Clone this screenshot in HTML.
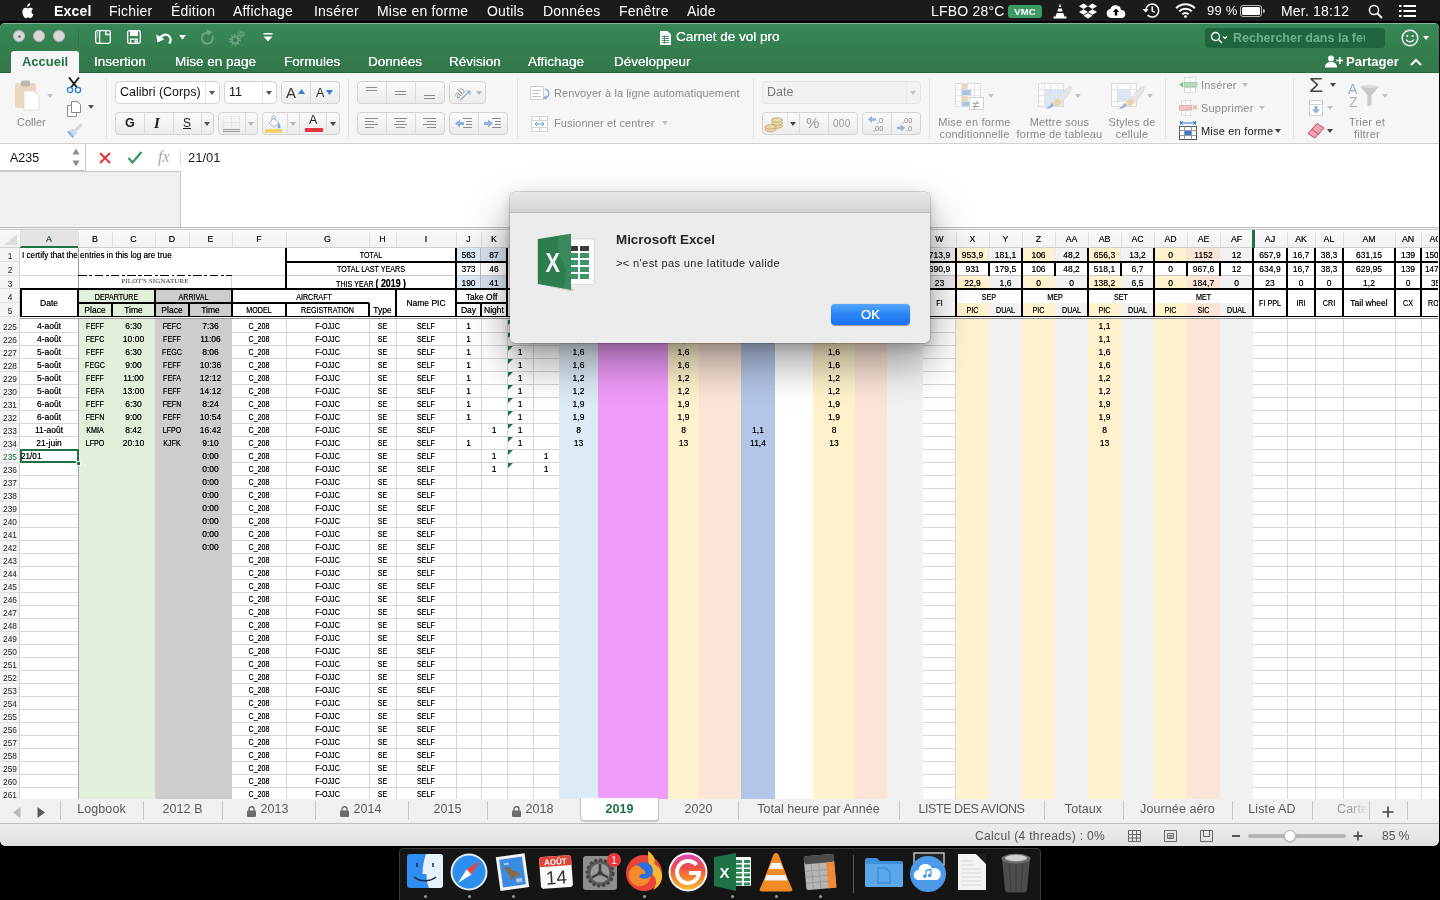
<!DOCTYPE html>
<html lang="fr"><head><meta charset="utf-8"><title>Carnet de vol pro</title>
<style>
*{box-sizing:border-box;margin:0;padding:0}
html,body{width:1440px;height:900px;overflow:hidden;background:#000;font-family:"Liberation Sans",sans-serif;}
.abs{position:absolute}
#menubar{will-change:transform;position:absolute;left:0;top:0;width:1440px;height:22px;background:#1b1b1b;border-bottom:1px solid #000;color:#fff;font-size:14px;line-height:22px;white-space:nowrap;letter-spacing:0.200px}
#menubar span{position:absolute;top:0}
#win{will-change:transform;position:absolute;left:0;top:23px;width:1439px;height:823px;background:#f6f6f6;border-radius:5px 5px 6px 6px;overflow:hidden}
#title{position:absolute;left:0;top:0;width:100%;height:50px;background:linear-gradient(#38885b,#35804f 45%,#33764b);box-shadow:inset 0 1px 0 #7fb796,inset 0 -1px 0 #256a40;z-index:3}
.tl{position:absolute;top:7px;width:12px;height:12px;border-radius:6px;background:#d8d8d8;border:0.5px solid #bcbcbc}
.tl i{position:absolute;left:4px;top:4px;width:3px;height:3px;border-radius:2px;background:#7d807e}
#rtabs{position:absolute;z-index:4;left:0;top:28px;width:100%;height:21px;color:#fff;font-size:13.500px;line-height:21px;white-space:nowrap;}
#rtabs span{position:absolute;top:0;text-shadow:0 0 0.4px #fff}
#rtabs .act{left:11px;width:68px;height:22px;background:#f6f6f6;border-radius:3px 3px 0 0;color:#1f7145;font-weight:bold;text-align:center;text-shadow:none;font-size:13px}
#ribbon{position:absolute;left:0;top:49px;width:100%;height:72px;background:#f6f6f6;border-bottom:1px solid #d1d1d1;color:#8a8a8a;font-size:11px;white-space:nowrap}
.btn{position:absolute;height:23px;border:1px solid #d4d4d4;border-radius:4px;background:linear-gradient(#fafafa,#ececec);}
.btn.w{background:#fff}
.vsep{position:absolute;top:6px;height:60px;width:1px;background:#e0e0e0}
.bsep{position:absolute;top:0;width:1px;height:21px;background:#dcdcdc}
.rt{position:absolute;}

#fbar{position:absolute;left:0;top:121px;width:100%;height:84px;background:#fff;border-bottom:1px solid #bdbdbd;box-shadow:0 1px 0 #f3f3f3}
#stabs{position:absolute;left:0;top:775.5px;width:100%;height:25.5px;background:#f0f0f0;border-bottom:1px solid #bdbdbd;white-space:nowrap}
.st{position:absolute;top:1px;height:20px;line-height:19px;font-size:12.500px;color:#5a5a5a;text-align:center;letter-spacing:0.100px}
#status{position:absolute;left:0;top:801px;width:100%;height:22px;background:linear-gradient(#ececec,#e0e0e0)}
#dlg{will-change:transform;position:absolute;left:510px;top:192px;width:420px;height:151px;background:#ececec;border-radius:5px;box-shadow:0 0 0 0.500px rgba(0,0,0,0.300),0 20px 40px 2px rgba(0,0,0,0.360),0 5px 12px rgba(0,0,0,0.160);overflow:hidden}
#dlgt{position:absolute;left:0;top:0;width:100%;height:21px;background:linear-gradient(#e8e8e8,#d3d3d3);border-bottom:1px solid #b8b8b8}
#dock{will-change:transform;position:absolute;left:399px;top:848px;width:642px;height:60px;background:#151515;border:1px solid #3a3a3a;border-radius:4px 4px 0 0}

#grid{position:absolute;left:0;top:206px;width:1437.500px;height:570px;background:#fff;overflow:hidden;font-size:8.500px;color:#000}
#grid .a{position:absolute}
#grid .c{position:absolute;text-align:center;white-space:nowrap;overflow:visible;text-shadow:0 0 0.400px rgba(0,0,0,0.700)}
#grid .c.u{transform:scaleX(0.840);transform-origin:50% 50%}
#grid .c.l{text-align:left;transform-origin:0 50%}
#grid .c.l:not(.u){transform:scaleX(0.960)}
#grid .c.ser{font-family:"Liberation Serif",serif;font-size:7px;transform:none;color:#333;text-shadow:none;letter-spacing:0.100px}
#grid .c.rh{font-size:9px;text-shadow:none;transform:scaleX(0.920);padding-top:1px}
#grid .c.ch{font-size:8.800px;color:#1a1a1a;text-shadow:0 0 0.400px rgba(0,0,0,0.800);transform:none}
#grid .tri{width:0;height:0;border-top:5px solid #1e7145;border-right:5px solid transparent}
#grid b{font-size:10.500px}
</style></head>
<body>
<div id="menubar"><svg class="abs" style="left:20px;top:3px" width="15" height="17" viewBox="0 0 15 17"><path fill="#fff" d="M10.2 0.3c0.1 0.9-0.3 1.8-0.8 2.400-0.600 0.700-1.500 1.200-2.300 1.100-0.100-0.900 0.300-1.800 0.800-2.300 0.600-0.700 1.600-1.200 2.300-1.200zM13 5.900c-0.100 0.100-1.500 0.900-1.500 2.700 0 2.100 1.800 2.800 1.900 2.800 0 0.100-0.300 1-0.900 2-0.600 0.800-1.200 1.700-2.100 1.700s-1.200-0.500-2.200-0.500c-1.100 0-1.400 0.600-2.200 0.600-0.900 0-1.600-0.900-2.200-1.800-1.200-1.700-2.100-4.800-0.900-6.900 0.600-1.100 1.700-1.700 2.800-1.700 0.900 0 1.700 0.600 2.200 0.600s1.500-0.700 2.600-0.600c0.400 0 1.700 0.200 2.500 1.100z"/></svg><span style="left:54px;font-weight:bold;">Excel</span><span style="left:109px;">Fichier</span><span style="left:171px;">Édition</span><span style="left:233px;">Affichage</span><span style="left:314px;">Insérer</span><span style="left:377px;">Mise en forme</span><span style="left:487px;">Outils</span><span style="left:543px;">Données</span><span style="left:619px;">Fenêtre</span><span style="left:687px;">Aide</span><span style="left:931px;font-size:14px">LFBO 28°C</span><div class="abs" style="left:1008px;top:5px;width:34px;height:13px;border-radius:3px;background:#3c9a64;color:#fff;font-size:9.5px;line-height:13px;text-align:center;font-weight:bold">VMC</div><svg class="abs" style="left:1052px;top:3px" width="16" height="16" viewBox="0 0 16 16"><path fill="#fff" d="M8 0.500l1.200 3.500h-2.400zM6.300 5.500h3.400l1 3h-5.400zM4.800 10h6.400l1.300 3.500h2v2h-13v-2h2z"/></svg><svg class="abs" style="left:1079px;top:3px" width="18" height="16" viewBox="0 0 18 16"><path fill="#fff" d="M4.500 0.500l4.500 2.800-4.500 2.800-4.500-2.800zM13.500 0.500l4.500 2.800-4.500 2.800-4.500-2.800zM0 9l4.500-2.800 4.500 2.800-4.500 2.800zM13.500 6.200l4.500 2.800-4.500 2.800-4.500-2.800zM4.500 12.700l4.500-2.800 4.500 2.800-4.500 2.800z"/></svg><svg class="abs" style="left:1106px;top:4px" width="20" height="14" viewBox="0 0 20 14"><path fill="#fff" d="M5 14a4.500 4.500 0 0 1-0.700-8.900a5.500 5.500 0 0 1 10.700 0.900a4 4 0 0 1 0.500 8z"/><path fill="#000" d="M10 4.500l3.200 3.500h-2v3.500h-2.400v-3.500h-2z"/></svg><svg class="abs" style="left:1142px;top:2px" width="19" height="17" viewBox="0 0 19 17"><path fill="none" stroke="#fff" stroke-width="1.500" d="M3.700 8.500a6.500 6.500 0 1 1 1.900 4.600M10.200 4.500v4.300l2.500 1.500"/><path fill="#fff" d="M0.500 7l3.200 3.500 3-3.500z"/></svg><svg class="abs" style="left:1175px;top:3px" width="21" height="15" viewBox="0 0 21 15"><path fill="none" stroke="#fff" stroke-width="2" stroke-linecap="butt" d="M1.200 5.200a13 13 0 0 1 18.600 0M4.200 8.300a8.800 8.800 0 0 1 12.600 0M7.300 11.300a4.500 4.500 0 0 1 6.400 0"/><circle cx="10.500" cy="13.600" r="1.400" fill="#fff"/></svg><span style="left:1207px;font-size:13px">99 %</span><svg class="abs" style="left:1240px;top:5px" width="25" height="12" viewBox="0 0 25 12"><rect x="0.500" y="0.500" width="21" height="11" rx="2.500" fill="none" stroke="#fff" stroke-opacity="0.700"/><rect x="2" y="2" width="18" height="8" rx="1.200" fill="#fff"/><path fill="#fff" fill-opacity="0.700" d="M23 4v4a2 2 0 0 0 0-4z"/></svg><span style="left:1281px">Mer. 18:12</span><svg class="abs" style="left:1368px;top:4px" width="15" height="15" viewBox="0 0 15 15"><circle cx="6" cy="6" r="4.600" fill="none" stroke="#fff" stroke-width="1.500"/><path stroke="#fff" stroke-width="1.800" d="M9.300 9.300l4.700 4.700"/></svg><svg class="abs" style="left:1399px;top:5px" width="17" height="12" viewBox="0 0 17 12"><path fill="#fff" d="M0 0h2.500v2h-2.500zM4.500 0h12.500v2h-12.500zM0 5h2.500v2h-2.500zM4.500 5h12.500v2h-12.500zM0 10h2.500v2h-2.500zM4.500 10h12.500v2h-12.500z"/></svg></div>
<div id="win">
<div id="title"><div class="tl" style="left:13px"><i></i></div><div class="tl" style="left:33px"></div><div class="tl" style="left:53px"></div><div class="abs" style="left:78px;top:6px;width:1px;height:18px;background:rgba(0,0,0,0.130)"></div><svg class="abs" style="left:95px;top:7px" width="16" height="14" viewBox="0 0 16 14"><rect x="0.700" y="0.700" width="14.600" height="12.600" rx="1.800" stroke="#fff" fill="none" stroke-width="1.300"/><path stroke="#fff" fill="none" stroke-width="1.300" d="M4.600 0.700v12.600M10.800 0.700v3.800h4.200"/><path stroke="#fff" stroke-width="1" stroke-dasharray="1 1" d="M2.600 2.500v6"/></svg><svg class="abs" style="left:127px;top:7px" width="14" height="14" viewBox="0 0 14 14"><rect x="0.700" y="0.700" width="12.600" height="12.600" rx="1.500" stroke="#fff" fill="none" stroke-width="1.300"/><path fill="#fff" d="M3 1h8v5h-8z"/><path stroke="#fff" fill="none" stroke-width="1.300" d="M3.600 13.300v-4.200h6.800v4.200"/><path fill="#fff" d="M7.500 10.300h2v2.500h-2z"/></svg><svg class="abs" style="left:156px;top:8px" width="17" height="13" viewBox="0 0 17 13"><path stroke="#fff" fill="none" stroke-width="2.200" d="M4 8c1.500-4.500 6.500-5.500 9-3 2.200 2.300 2 5.200 0 7.500"/><path fill="#fff" d="M0.300 3.500l1 8 7.200-3.200z"/></svg><svg class="abs" style="left:179px;top:12px" width="7" height="5" viewBox="0 0 7 5"><path fill="#fff" d="M0 0h7l-3.500 4.500z"/></svg><svg class="abs" style="left:199px;top:6px" width="15" height="16" viewBox="0 0 15 16"><path stroke="#6aa582" fill="none" stroke-width="2" d="M9.500 3.800a5.500 5.500 0 1 0 3.800 3.200"/><path fill="#6aa582" d="M7.500 0.300l6 2.700-4.800 4z"/></svg><svg class="abs" style="left:229px;top:7px" width="17" height="16" viewBox="0 0 17 16"><circle cx="6" cy="10" r="3.200" fill="none" stroke="#6aa582" stroke-width="1.600"/><circle cx="6" cy="10" r="5" fill="none" stroke="#6aa582" stroke-width="1.800" stroke-dasharray="1.700 1.440"/><circle cx="12.500" cy="4" r="1.600" fill="none" stroke="#6aa582" stroke-width="1.300"/><circle cx="12.500" cy="4" r="3" fill="none" stroke="#6aa582" stroke-width="1.300" stroke-dasharray="1.300 1.060"/></svg><svg class="abs" style="left:263px;top:10px" width="10" height="9" viewBox="0 0 10 9"><path fill="#fff" d="M0.500 0h9v1.500h-9zM0.500 3.500h9l-4.500 5z"/></svg><svg class="abs" style="left:660px;top:8px" width="11" height="14" viewBox="0 0 11 14"><path fill="#fff" d="M0 0h7.500l3.500 3.500v10.500h-11z"/><path stroke="#2a774a" stroke-width="0.800" d="M2 5.500h7M2 7.500h7M2 9.500h7M2 11.500h7M4.500 4.500v8"/></svg><div class="abs" style="left:676px;top:6px;color:#fff;font-size:13.500px;line-height:16px;white-space:nowrap;text-shadow:0 0 0.300px #fff">Carnet de vol pro</div><div class="abs" style="left:1205px;top:5px;width:180px;height:20px;border-radius:4px;background:#1f653d;"></div><svg class="abs" style="left:1210px;top:8px" width="18" height="14" viewBox="0 0 18 14"><circle cx="5.500" cy="5.500" r="4" fill="none" stroke="#fff" stroke-width="1.300"/><path stroke="#fff" stroke-width="1.500" d="M8.500 8.500l3.500 3.500"/><path stroke="#fff" stroke-width="1.200" fill="none" d="M13 5.500l2 2 2-2"/></svg><div class="abs" style="left:1233px;top:7px;color:#6fb08b;font-size:12.500px;line-height:16px;white-space:nowrap;font-weight:bold;width:132px;overflow:hidden">Rechercher dans la feuille</div><svg class="abs" style="left:1401px;top:6px" width="18" height="18" viewBox="0 0 18 18"><circle cx="9" cy="9" r="7.800" fill="none" stroke="#fff" stroke-width="1.400"/><circle cx="6.300" cy="7" r="1.100" fill="#fff"/><circle cx="11.700" cy="7" r="1.100" fill="#fff"/><path fill="none" stroke="#fff" stroke-width="1.300" d="M5 10.500c2 3 6 3 8 0"/></svg><svg class="abs" style="left:1423px;top:13px" width="6" height="4" viewBox="0 0 6 4"><path fill="#fff" d="M0 0h6l-3 4z"/></svg></div><div id="rtabs"><span class="act">Accueil</span><span style="left:94px">Insertion</span><span style="left:175px">Mise en page</span><span style="left:284px">Formules</span><span style="left:368px">Données</span><span style="left:449px">Révision</span><span style="left:528px">Affichage</span><span style="left:614px">Développeur</span><svg class="abs" style="left:1325px;top:4px" width="18" height="13" viewBox="0 0 18 13"><circle cx="6" cy="3.500" r="3" fill="#fff"/><path fill="#fff" d="M0 12.500c0-4 2.500-5.500 6-5.500s6 1.500 6 5.500zM14 2h1.600v2.700h2.700v1.600h-2.700v2.700h-1.600v-2.700h-2.700v-1.600h2.700z"/></svg><span style="left:1346px;font-weight:bold;text-shadow:none;font-size:13px">Partager</span><svg class="abs" style="left:1410px;top:7px" width="12" height="8" viewBox="0 0 12 8"><path fill="none" stroke="#fff" stroke-width="2" d="M1 7l5-5 5 5"/></svg></div>
<div id="ribbon"><svg class="abs" style="left:14px;top:8px" width="28" height="31" viewBox="0 0 28 31"><rect x="1" y="3" width="21" height="25" rx="2" fill="#ecd9bd"/><rect x="7" y="0.500" width="9" height="6" rx="1.500" fill="#b9b9b9"/><path fill="#fff" stroke="#d0d0d0" stroke-width="0.600" d="M10 11h10l5 5v14h-15z"/></svg><svg class="abs" style="left:47px;top:22px" width="6" height="4" viewBox="0 0 6 4"><path fill="#c4c4c4" d="M0 0h6l-3 4z"/></svg><div class="rt" style="left:17px;top:44px;font-size:11px;line-height:13px;color:#8a8a8a">Coller</div><svg class="abs" style="left:66px;top:5px" width="16" height="17" viewBox="0 0 16 17"><path stroke="#111" stroke-width="1.800" d="M3 0.500l8 10M13 0.500l-8 10"/><circle cx="4" cy="13" r="2.600" fill="none" stroke="#2f7fd6" stroke-width="1.400"/><circle cx="12" cy="13" r="2.600" fill="none" stroke="#2f7fd6" stroke-width="1.400"/></svg><svg class="abs" style="left:66px;top:29px" width="16" height="16" viewBox="0 0 16 16"><path fill="#fff" stroke="#8a8a8a" stroke-width="1" d="M5.500 0.500h6l3 3v8h-9zM1.500 4.500h4v7h5v4h-9z"/></svg><svg class="abs" style="left:88px;top:33px" width="6" height="4" viewBox="0 0 6 4"><path fill="#555" d="M0 0h6l-3 4z"/></svg><svg class="abs" style="left:66px;top:51px" width="17" height="17" viewBox="0 0 17 17"><path stroke="#d6d6d6" stroke-width="3" stroke-linecap="round" d="M15 2L10.500 6.500"/><path fill="#e9e9e9" d="M8 5.500l3.500 3.500-1.500 1.500-3.500-3.500z"/><path fill="#c5d8ee" d="M1 9L7 5.500L11.500 10L6.500 15z"/><path fill="#8fb1e0" d="M1 9L6.500 15L8 13.500L3 8z"/></svg><div class="vsep" style="left:106px"></div><div class="btn w" style="left:115px;top:9px;width:105px"><div class="bsep" style="left:89px;background:#e6e6e6"></div></div><div class="rt" style="left:120px;top:13px;font-size:12.500px;line-height:15px;color:#111">Calibri (Corps)</div><svg class="abs" style="left:209px;top:19px" width="6" height="4" viewBox="0 0 6 4"><path fill="#555" d="M0 0h6l-3 4z"/></svg><div class="btn w" style="left:224px;top:9px;width:53px"><div class="bsep" style="left:37px;background:#e6e6e6"></div></div><div class="rt" style="left:229px;top:13px;font-size:12.500px;line-height:15px;color:#111">11</div><svg class="abs" style="left:266px;top:19px" width="6" height="4" viewBox="0 0 6 4"><path fill="#555" d="M0 0h6l-3 4z"/></svg><div class="btn" style="left:281px;top:9px;width:59px"><div class="bsep" style="left:28px"></div></div><div class="rt" style="left:286px;top:12px;font-size:15px;line-height:18px;color:#333">A</div><svg class="abs" style="left:298px;top:17px" width="7" height="5" viewBox="0 0 7 5"><path fill="#2f7fd6" d="M0 5h7l-3.500-5z"/></svg><div class="rt" style="left:316px;top:14px;font-size:12.500px;line-height:15px;color:#333">A</div><svg class="abs" style="left:326px;top:18px" width="7" height="5" viewBox="0 0 7 5"><path fill="#2f7fd6" d="M0 0h7l-3.500 5z"/></svg><div class="btn" style="left:115px;top:40px;width:99px"><div class="bsep" style="left:28px"></div><div class="bsep" style="left:57px"></div><div class="bsep" style="left:85px"></div></div><div class="rt" style="left:125px;top:44px;font-size:12.500px;line-height:15px;color:#222;font-weight:bold">G</div><div class="rt" style="left:154px;top:43px;font-size:15px;line-height:17px;color:#222;font-style:italic;font-family:'Liberation Serif',serif;font-weight:bold">I</div><div class="rt" style="left:183px;top:44px;font-size:12px;line-height:15px;color:#222;text-decoration:underline">S</div><svg class="abs" style="left:204px;top:50px" width="6" height="4" viewBox="0 0 6 4"><path fill="#555" d="M0 0h6l-3 4z"/></svg><div class="btn" style="left:218px;top:40px;width:40px"><div class="bsep" style="left:26px"></div></div><svg class="abs" style="left:223px;top:44px" width="18" height="17" viewBox="0 0 18 17"><path fill="none" stroke="#d9d9d9" stroke-width="1" stroke-dasharray="1 1" d="M0.500 0.500h16v12M0.500 0.500v12M8.500 0.500v12M0.500 6.500h16"/><path stroke="#9a9a9a" stroke-width="1" d="M0 13.500h17M0 15.500h17"/></svg><svg class="abs" style="left:248px;top:50px" width="6" height="4" viewBox="0 0 6 4"><path fill="#b5b5b5" d="M0 0h6l-3 4z"/></svg><div class="btn" style="left:262px;top:40px;width:78px"><div class="bsep" style="left:24px"></div><div class="bsep" style="left:36px"></div><div class="bsep" style="left:63px"></div></div><svg class="abs" style="left:265px;top:43px" width="18" height="18" viewBox="0 0 18 18"><path fill="#fff" stroke="#9fb3c8" stroke-width="1" d="M4 8l5-5 5 5-5 4z"/><path fill="none" stroke="#9fb3c8" d="M7 5v-3a1.500 1.500 0 0 1 3 0v3"/><path fill="#7fa8d8" d="M14 8c1 2 1.500 3 1.500 3.800a1.500 1.500 0 0 1-3 0c0-0.800 0.500-1.800 1.500-3.800z"/><rect x="0" y="14" width="17" height="4" fill="#f2d46b"/></svg><svg class="abs" style="left:290px;top:50px" width="6" height="4" viewBox="0 0 6 4"><path fill="#b5b5b5" d="M0 0h6l-3 4z"/></svg><div class="rt" style="left:309px;top:41px;font-size:12.500px;line-height:14px;color:#222">A</div><div class="abs" style="left:305px;top:56px;width:18px;height:4px;background:#e5343f"></div><svg class="abs" style="left:330px;top:50px" width="6" height="4" viewBox="0 0 6 4"><path fill="#444" d="M0 0h6l-3 4z"/></svg><div class="vsep" style="left:348px"></div><div class="btn" style="left:357px;top:9px;width:88px"><div class="bsep" style="left:28px"></div><div class="bsep" style="left:57px"></div></div><svg class="abs" style="left:364px;top:14px" width="15" height="13" viewBox="0 0 15 13"><path stroke="#8c8c8c" stroke-width="1" d="M2 1.5h11M2 4.5h11"/></svg><svg class="abs" style="left:393px;top:14px" width="15" height="13" viewBox="0 0 15 13"><path stroke="#8c8c8c" stroke-width="1" d="M2 5.5h11M2 8.5h11"/></svg><svg class="abs" style="left:422px;top:14px" width="15" height="13" viewBox="0 0 15 13"><path stroke="#8c8c8c" stroke-width="1" d="M2 9.5h11M2 12.5h11"/></svg><div class="btn" style="left:449px;top:9px;width:37px"></div><svg class="abs" style="left:454px;top:12px" width="20" height="18" viewBox="0 0 20 18"><text x="1" y="12" font-size="10" fill="#9a9a9a" transform="rotate(-45 6 10)" font-family="Liberation Sans, sans-serif">ab</text><path stroke="#8fb1dc" stroke-width="1.200" fill="none" d="M6 16l10-9M16 7h-4M16 7v4"/></svg><svg class="abs" style="left:476px;top:19px" width="6" height="4" viewBox="0 0 6 4"><path fill="#b5b5b5" d="M0 0h6l-3 4z"/></svg><div class="btn" style="left:357px;top:40px;width:88px"><div class="bsep" style="left:28px"></div><div class="bsep" style="left:57px"></div></div><svg class="abs" style="left:364px;top:45px" width="15" height="13" viewBox="0 0 15 13"><path stroke="#8c8c8c" stroke-width="1" d="M1 1.500h13M1 4.500h9M1 7.500h13M1 10.500h9"/></svg><svg class="abs" style="left:393px;top:45px" width="15" height="13" viewBox="0 0 15 13"><path stroke="#8c8c8c" stroke-width="1" d="M1 1.500h13M3 4.500h9M1 7.500h13M3 10.500h9"/></svg><svg class="abs" style="left:422px;top:45px" width="15" height="13" viewBox="0 0 15 13"><path stroke="#8c8c8c" stroke-width="1" d="M1 1.500h13M5 4.500h9M1 7.500h13M5 10.500h9"/></svg><div class="btn" style="left:449px;top:40px;width:59px"><div class="bsep" style="left:28px"></div></div><svg class="abs" style="left:455px;top:45px" width="18" height="13" viewBox="0 0 18 13"><path fill="#8fb1dc" d="M0 6.500l5-4v2.500h4v3h-4v2.500z"/><path stroke="#8c8c8c" d="M8 1.500h9M11 4.500h6M11 7.500h6M8 10.500h9"/></svg><svg class="abs" style="left:484px;top:45px" width="18" height="13" viewBox="0 0 18 13"><path fill="#8fb1dc" d="M9 6.500l-5-4v2.500h-4v3h4v2.500z"/><path stroke="#8c8c8c" d="M8 1.500h9M11 4.500h6M11 7.500h6M8 10.500h9"/></svg><div class="vsep" style="left:517px"></div><svg class="abs" style="left:530px;top:14px" width="21" height="15" viewBox="0 0 21 15"><rect x="0.500" y="0.500" width="13" height="13" fill="#fff" stroke="#cfcfcf"/><path stroke="#bdbdbd" d="M2.500 4.500h8M2.500 7.500h6M2.500 10.500h8"/><path fill="none" stroke="#8fb1dc" stroke-width="1.500" d="M15 3c5 1 5 8 0 9"/><path fill="#8fb1dc" d="M12.500 12l4-3v5z"/></svg><div class="rt" style="left:554px;top:14px;font-size:11px;line-height:14px;letter-spacing:0.100px">Renvoyer à la ligne automatiquement</div><svg class="abs" style="left:531px;top:44px" width="18" height="17" viewBox="0 0 18 17"><rect x="0.500" y="0.500" width="16" height="15" fill="#fff" stroke="#d4d4d4"/><path stroke="#d4d4d4" d="M0.500 4.500h16M0.500 11.500h16M8.500 0.500v4M8.500 11.500v4"/><path stroke="#5b9bd5" stroke-width="1" d="M4 8h9M4 8l2-2M4 8l2 2M13 8l-2-2M13 8l-2 2" fill="none"/></svg><div class="rt" style="left:554px;top:44px;font-size:11px;line-height:14px;letter-spacing:0.100px">Fusionner et centrer</div><svg class="abs" style="left:662px;top:49px" width="6" height="4" viewBox="0 0 6 4"><path fill="#c0c0c0" d="M0 0h6l-3 4z"/></svg><div class="vsep" style="left:753px"></div><div class="btn" style="left:762px;top:9px;width:159px;background:#f2f2f2;border-color:#e4e4e4"><div class="bsep" style="left:143px;background:#e9e9e9"></div></div><div class="rt" style="left:767px;top:13px;font-size:12.500px;line-height:15px;color:#7a7a7a">Date</div><svg class="abs" style="left:910px;top:19px" width="6" height="4" viewBox="0 0 6 4"><path fill="#c0c0c0" d="M0 0h6l-3 4z"/></svg><div class="btn" style="left:762px;top:40px;width:96px"><div class="bsep" style="left:24px;background:#e6e6e6"></div><div class="bsep" style="left:36px"></div><div class="bsep" style="left:65px"></div></div><svg class="abs" style="left:764px;top:43px" width="21" height="18" viewBox="0 0 21 18"><g fill="#ecd9a8" stroke="#b99b62" stroke-width="0.700"><ellipse cx="13" cy="11" rx="5.500" ry="2.200"/><ellipse cx="13" cy="8" rx="5.500" ry="2.200"/><ellipse cx="13" cy="5" rx="5.500" ry="2.200"/><ellipse cx="6.500" cy="14.500" rx="5.500" ry="2.200"/><ellipse cx="6.500" cy="11.800" rx="5.500" ry="2.200"/></g></svg><svg class="abs" style="left:790px;top:50px" width="6" height="4" viewBox="0 0 6 4"><path fill="#444" d="M0 0h6l-3 4z"/></svg><div class="rt" style="left:806px;top:42px;font-size:15px;line-height:18px;color:#9a9a9a">%</div><div class="rt" style="left:833px;top:45px;font-size:10px;line-height:13px;color:#9a9a9a;letter-spacing:0.300px">000</div><div class="btn" style="left:862px;top:40px;width:59px"><div class="bsep" style="left:28px"></div></div><svg class="abs" style="left:867px;top:43px" width="20" height="18" viewBox="0 0 20 18"><path fill="#8fb1dc" d="M1 4.500l4-3.500v2.200h4v2.600h-4v2.200z"/><text x="10" y="8" font-size="7.500" fill="#8a8a8a" font-family="Liberation Sans, sans-serif">,0</text><text x="6" y="16" font-size="7.500" fill="#8a8a8a" font-family="Liberation Sans, sans-serif">,00</text></svg><svg class="abs" style="left:896px;top:43px" width="20" height="18" viewBox="0 0 20 18"><path fill="#8fb1dc" d="M9 13l-4-3.500v2.200h-4v2.600h4v2.200z"/><text x="6" y="8" font-size="7.500" fill="#8a8a8a" font-family="Liberation Sans, sans-serif">,00</text><text x="10" y="16" font-size="7.500" fill="#8a8a8a" font-family="Liberation Sans, sans-serif">,0</text></svg><div class="vsep" style="left:929px"></div><svg class="abs" style="left:955px;top:11px" width="30" height="28" viewBox="0 0 30 28"><rect x="0.500" y="0.500" width="25" height="23" fill="#fff" stroke="#dcdcdc"/><path stroke="#e2e2e2" d="M0.500 6.500h25M0.500 12.500h25M0.500 18.500h25M6.500 0.500v23M12.500 0.500v23M19.500 0.500v23"/><rect x="7" y="1" width="5" height="5" fill="#f1d5b5"/><rect x="7" y="7" width="9" height="5" fill="#a9c4e6"/><rect x="7" y="13" width="5" height="5" fill="#f1d5b5"/><rect x="7" y="19" width="7" height="4" fill="#a9c4e6"/><rect x="14.500" y="14.500" width="14" height="12" fill="#fff" stroke="#cfcfcf"/><text x="17" y="25.500" font-size="13" fill="#9a9a9a" font-family="Liberation Sans, sans-serif">≠</text></svg><svg class="abs" style="left:988px;top:22px" width="6" height="4" viewBox="0 0 6 4"><path fill="#c4c4c4" d="M0 0h6l-3 4z"/></svg><div class="rt" style="left:924px;top:44px;width:101px;text-align:center;font-size:11px;line-height:12px;letter-spacing:0.200px">Mise en forme<br>conditionnelle</div><svg class="abs" style="left:1038px;top:11px" width="34" height="29" viewBox="0 0 34 29"><rect x="0.500" y="0.500" width="25" height="23" fill="#fff" stroke="#dcdcdc"/><rect x="7" y="7" width="18" height="16" fill="#dbe7f5"/><path stroke="#e2e2e2" d="M0.500 6.500h25M0.500 12.500h25M0.500 18.500h25M6.500 0.500v23M12.500 0.500v23M19.500 0.500v23"/><path fill="#e6e6e6" stroke="#d2d2d2" stroke-width="0.600" d="M33 3.500C35 5 30 13 24 19L20 15.500C24 9 31 2.500 33 3.500z"/><path fill="#ecd2a9" d="M20 15.500L24 19C22 22.500 19 23.500 15.500 22.500C14.500 19 17 16.500 20 15.500z"/><path fill="#8fb1e0" d="M15.500 22.500C14 25 11 26 7.500 25.500C10.500 24 12.500 22 14 19.500z"/></svg><svg class="abs" style="left:1075px;top:22px" width="6" height="4" viewBox="0 0 6 4"><path fill="#c4c4c4" d="M0 0h6l-3 4z"/></svg><div class="rt" style="left:1009px;top:44px;width:101px;text-align:center;font-size:11px;line-height:12px;letter-spacing:0.200px">Mettre sous<br>forme de tableau</div><svg class="abs" style="left:1111px;top:11px" width="34" height="29" viewBox="0 0 34 29"><rect x="0.500" y="0.500" width="25" height="23" fill="#fff" stroke="#dcdcdc"/><rect x="7" y="7" width="12" height="11" fill="#dbe7f5"/><path stroke="#e2e2e2" d="M0.500 6.500h25M0.500 18.500h25M6.500 0.500v23M19.500 0.500v23"/><path fill="#e6e6e6" stroke="#d2d2d2" stroke-width="0.600" d="M33 3.500C35 5 30 13 24 19L20 15.500C24 9 31 2.500 33 3.500z"/><path fill="#ecd2a9" d="M20 15.500L24 19C22 22.500 19 23.500 15.500 22.500C14.500 19 17 16.500 20 15.500z"/><path fill="#8fb1e0" d="M15.500 22.500C14 25 11 26 7.500 25.500C10.500 24 12.500 22 14 19.500z"/></svg><svg class="abs" style="left:1147px;top:22px" width="6" height="4" viewBox="0 0 6 4"><path fill="#c4c4c4" d="M0 0h6l-3 4z"/></svg><div class="rt" style="left:1092px;top:44px;width:80px;text-align:center;font-size:11px;line-height:12px;letter-spacing:0.200px">Styles de<br>cellule</div><div class="vsep" style="left:1165px"></div><svg class="abs" style="left:1179px;top:5px" width="19" height="16" viewBox="0 0 19 16"><path stroke="#d8d8d8" fill="#fff" d="M5.500 0.500h11v15h-11zM5.500 5.500h11M5.500 10.500h11M11 0.500v15"/><rect x="5" y="5.500" width="13" height="4.500" fill="#b5dcc0" stroke="#8fc3a0" stroke-width="0.600"/><path fill="#8fc3a0" d="M0 7.700l4-3v6z"/></svg><div class="rt" style="left:1201px;top:6px;font-size:11px;line-height:14px;letter-spacing:0.200px">Insérer</div><svg class="abs" style="left:1242px;top:11px" width="6" height="4" viewBox="0 0 6 4"><path fill="#c0c0c0" d="M0 0h6l-3 4z"/></svg><svg class="abs" style="left:1179px;top:28px" width="19" height="16" viewBox="0 0 19 16"><path stroke="#d8d8d8" fill="#fff" d="M2.500 0.500h9v15h-9zM2.500 5.500h9M2.500 10.500h9M7 0.500v15"/><rect x="0.500" y="5.500" width="12" height="4.500" fill="#f0c2c8" stroke="#d99aa3" stroke-width="0.600"/><path stroke="#e5b184" stroke-width="1.300" d="M14 5.500l4 4M18 5.500l-4 4"/></svg><div class="rt" style="left:1201px;top:29px;font-size:11px;line-height:14px;letter-spacing:0.200px">Supprimer</div><svg class="abs" style="left:1259px;top:34px" width="6" height="4" viewBox="0 0 6 4"><path fill="#c0c0c0" d="M0 0h6l-3 4z"/></svg><svg class="abs" style="left:1179px;top:49px" width="18" height="19" viewBox="0 0 18 19"><path stroke="#2f7fd6" stroke-width="1" d="M1.500 0v4M16.500 0v4M2 2h14M4 0.500l-2 1.500 2 1.500M14 0.500l2 1.500-2 1.500" fill="none"/><rect x="0.500" y="5.500" width="17" height="13" fill="#fff" stroke="#555"/><path stroke="#9a9a9a" d="M0.500 9.500h17M0.500 14.500h17M5.500 5.500v13M12.500 5.500v13"/><rect x="6" y="10" width="6" height="4" fill="#2f7fd6"/></svg><div class="rt" style="left:1201px;top:52px;font-size:11px;line-height:14px;color:#222;letter-spacing:0.200px">Mise en forme</div><svg class="abs" style="left:1275px;top:57px" width="6" height="4" viewBox="0 0 6 4"><path fill="#444" d="M0 0h6l-3 4z"/></svg><div class="vsep" style="left:1293px"></div><div class="rt" style="left:1309px;top:1px;font-size:21px;line-height:24px;color:#444;transform:scaleX(1.100);transform-origin:0 50%">Σ</div><svg class="abs" style="left:1330px;top:11px" width="6" height="4" viewBox="0 0 6 4"><path fill="#444" d="M0 0h6l-3 4z"/></svg><svg class="abs" style="left:1309px;top:28px" width="14" height="16" viewBox="0 0 14 16"><rect x="0.500" y="0.500" width="13" height="15" fill="#fff" stroke="#d0d0d0"/><path stroke="#d0d0d0" d="M0.500 4.500h13"/><path fill="#8fb1dc" d="M5.500 6h3v3.500h2.500l-4 4-4-4h2.500z"/></svg><svg class="abs" style="left:1327px;top:34px" width="6" height="4" viewBox="0 0 6 4"><path fill="#c0c0c0" d="M0 0h6l-3 4z"/></svg><svg class="abs" style="left:1307px;top:50px" width="18" height="17" viewBox="0 0 18 17"><path fill="#f0a3b0" stroke="#c2475a" stroke-width="1" d="M1 11.500l9-10 7 4.500-9 10z"/><path stroke="#c2475a" d="M4.500 7.500l7 4.500"/></svg><svg class="abs" style="left:1327px;top:57px" width="6" height="4" viewBox="0 0 6 4"><path fill="#444" d="M0 0h6l-3 4z"/></svg><div class="rt" style="left:1348px;top:10px;font-size:14px;line-height:14px;color:#8fb1dc">A</div><div class="rt" style="left:1349px;top:23px;font-size:14px;line-height:14px;color:#b5b5b5">Z</div><svg class="abs" style="left:1359px;top:13px" width="21" height="22" viewBox="0 0 21 22"><path fill="#c9c9c9" d="M0.500 1h20l-8 9v10l-4 1.500v-11.500z"/><ellipse cx="10.500" cy="1.500" rx="10" ry="1.500" fill="#dedede"/></svg><svg class="abs" style="left:1382px;top:22px" width="6" height="4" viewBox="0 0 6 4"><path fill="#c4c4c4" d="M0 0h6l-3 4z"/></svg><div class="rt" style="left:1332px;top:44px;width:70px;text-align:center;font-size:11px;line-height:12px;letter-spacing:0.200px">Trier et<br>filtrer</div></div>
<div id="fbar"><div class="abs" style="left:0;top:0;width:86px;height:27px;background:#fff;border-right:1px solid #c9c9c9;border-bottom:1px solid #c9c9c9"></div><div class="abs" style="left:10px;top:6px;font-size:13px;line-height:16px;color:#111;transform:scaleX(0.960);transform-origin:0 50%">A235</div><svg class="abs" style="left:72px;top:4px" width="8" height="19" viewBox="0 0 8 19"><path fill="#8d8d8d" d="M4 0.500l3.500 6h-7zM4 18.500l3.500-6h-7z"/></svg><svg class="abs" style="left:99px;top:8px" width="12" height="12" viewBox="0 0 12 12"><path stroke="#e5352f" stroke-width="2" d="M1 1l10 10M11 1l-10 10"/></svg><svg class="abs" style="left:127px;top:7px" width="16" height="13" viewBox="0 0 16 13"><path fill="none" stroke="#2f9a5c" stroke-width="2.200" d="M1.500 7l4 4.500 9-10.500"/></svg><div class="abs" style="left:158px;top:3px;font-size:16px;line-height:20px;color:#a9a9a9;font-family:'Liberation Serif',serif;font-style:italic">fx</div><div class="abs" style="left:180px;top:6px;width:1px;height:15px;background:#d9d9d9"></div><div class="abs" style="left:188px;top:6px;font-size:13px;line-height:16px;color:#222;">21/01</div><div class="abs" style="left:0;top:27px;width:181px;height:56px;background:#f0f0f0;border-right:1px solid #c9c9c9;border-top:1px solid #c9c9c9"></div></div>
<div id="grid"><div class="a" style="left:78px;top:89px;width:34px;height:480.5px;background:#e2efda;"></div><div class="a" style="left:112px;top:89px;width:43px;height:480.5px;background:#e2efda;"></div><div class="a" style="left:155px;top:89px;width:34px;height:480.5px;background:#cdcdcd;"></div><div class="a" style="left:189px;top:89px;width:43px;height:480.5px;background:#cdcdcd;"></div><div class="a" style="left:559px;top:89px;width:39px;height:480.5px;background:#ddebf7;"></div><div class="a" style="left:598px;top:89px;width:70px;height:480.5px;background:#ef9bf9;"></div><div class="a" style="left:668px;top:89px;width:31px;height:480.5px;background:#fff2cc;"></div><div class="a" style="left:699px;top:89px;width:42px;height:480.5px;background:#fce4d6;"></div><div class="a" style="left:741px;top:89px;width:34px;height:480.5px;background:#b4c6e7;"></div><div class="a" style="left:775px;top:89px;width:38px;height:480.5px;background:#fff;"></div><div class="a" style="left:813px;top:89px;width:42px;height:480.5px;background:#fff2cc;"></div><div class="a" style="left:855px;top:89px;width:32px;height:480.5px;background:#fce4d6;"></div><div class="a" style="left:887px;top:89px;width:36px;height:480.5px;background:#f2f2f2;"></div><div class="a" style="left:956px;top:89px;width:33px;height:480.5px;background:#fff2cc;"></div><div class="a" style="left:989px;top:89px;width:33px;height:480.5px;background:#f2f2f2;"></div><div class="a" style="left:1022px;top:89px;width:33px;height:480.5px;background:#fff2cc;"></div><div class="a" style="left:1055px;top:89px;width:33px;height:480.5px;background:#f2f2f2;"></div><div class="a" style="left:1088px;top:89px;width:33px;height:480.5px;background:#fff2cc;"></div><div class="a" style="left:1121px;top:89px;width:33px;height:480.5px;background:#f2f2f2;"></div><div class="a" style="left:1154px;top:89px;width:33px;height:480.5px;background:#fff2cc;"></div><div class="a" style="left:1187px;top:89px;width:33px;height:480.5px;background:#fce4d6;"></div><div class="a" style="left:1220px;top:89px;width:33px;height:480.5px;background:#f2f2f2;"></div><div class="a" style="left:78px;top:60px;width:77px;height:28px;background:#e2efda;"></div><div class="a" style="left:155px;top:60px;width:77px;height:28px;background:#cdcdcd;"></div><div class="a" style="left:456px;top:19px;width:25px;height:14px;background:#ddebf7;"></div><div class="a" style="left:481px;top:19px;width:26px;height:14px;background:#d9e1f2;"></div><div class="a" style="left:456px;top:46.5px;width:25px;height:13.5px;background:#ddebf7;"></div><div class="a" style="left:481px;top:46.5px;width:26px;height:13.5px;background:#d9e1f2;"></div><div class="a" style="left:923px;top:19px;width:33px;height:14px;background:#ededed;"></div><div class="a" style="left:923px;top:46.5px;width:33px;height:13.5px;background:#ededed;"></div><div class="a" style="left:956px;top:19px;width:33px;height:14px;background:#fff2cc;"></div><div class="a" style="left:956px;top:46.5px;width:33px;height:13.5px;background:#fff2cc;"></div><div class="a" style="left:956px;top:74px;width:33px;height:14px;background:#fff2cc;"></div><div class="a" style="left:989px;top:19px;width:33px;height:14px;background:#f2f2f2;"></div><div class="a" style="left:989px;top:46.5px;width:33px;height:13.5px;background:#f2f2f2;"></div><div class="a" style="left:989px;top:74px;width:33px;height:14px;background:#f2f2f2;"></div><div class="a" style="left:1022px;top:19px;width:33px;height:14px;background:#fff2cc;"></div><div class="a" style="left:1022px;top:46.5px;width:33px;height:13.5px;background:#fff2cc;"></div><div class="a" style="left:1022px;top:74px;width:33px;height:14px;background:#fff2cc;"></div><div class="a" style="left:1055px;top:19px;width:33px;height:14px;background:#f2f2f2;"></div><div class="a" style="left:1055px;top:46.5px;width:33px;height:13.5px;background:#f2f2f2;"></div><div class="a" style="left:1055px;top:74px;width:33px;height:14px;background:#f2f2f2;"></div><div class="a" style="left:1088px;top:19px;width:33px;height:14px;background:#fff2cc;"></div><div class="a" style="left:1088px;top:46.5px;width:33px;height:13.5px;background:#fff2cc;"></div><div class="a" style="left:1088px;top:74px;width:33px;height:14px;background:#fff2cc;"></div><div class="a" style="left:1121px;top:19px;width:33px;height:14px;background:#f2f2f2;"></div><div class="a" style="left:1121px;top:46.5px;width:33px;height:13.5px;background:#f2f2f2;"></div><div class="a" style="left:1121px;top:74px;width:33px;height:14px;background:#f2f2f2;"></div><div class="a" style="left:1154px;top:19px;width:33px;height:14px;background:#fff2cc;"></div><div class="a" style="left:1154px;top:46.5px;width:33px;height:13.5px;background:#fff2cc;"></div><div class="a" style="left:1154px;top:74px;width:33px;height:14px;background:#fff2cc;"></div><div class="a" style="left:1187px;top:19px;width:33px;height:14px;background:#fce4d6;"></div><div class="a" style="left:1187px;top:46.5px;width:33px;height:13.5px;background:#fce4d6;"></div><div class="a" style="left:1187px;top:74px;width:33px;height:14px;background:#fce4d6;"></div><div class="a" style="left:1220px;top:19px;width:33px;height:14px;background:#f2f2f2;"></div><div class="a" style="left:1220px;top:46.5px;width:33px;height:13.5px;background:#f2f2f2;"></div><div class="a" style="left:1220px;top:74px;width:33px;height:14px;background:#f2f2f2;"></div><div class="a" style="left:20px;top:103px;width:58px;height:1px;background:#d6d6d6;"></div><div class="a" style="left:232px;top:103px;width:327px;height:1px;background:#d6d6d6;"></div><div class="a" style="left:923px;top:103px;width:33px;height:1px;background:#d6d6d6;"></div><div class="a" style="left:1253px;top:103px;width:187px;height:1px;background:#d6d6d6;"></div><div class="a" style="left:20px;top:116px;width:58px;height:1px;background:#d6d6d6;"></div><div class="a" style="left:232px;top:116px;width:327px;height:1px;background:#d6d6d6;"></div><div class="a" style="left:923px;top:116px;width:33px;height:1px;background:#d6d6d6;"></div><div class="a" style="left:1253px;top:116px;width:187px;height:1px;background:#d6d6d6;"></div><div class="a" style="left:20px;top:129px;width:58px;height:1px;background:#d6d6d6;"></div><div class="a" style="left:232px;top:129px;width:327px;height:1px;background:#d6d6d6;"></div><div class="a" style="left:923px;top:129px;width:33px;height:1px;background:#d6d6d6;"></div><div class="a" style="left:1253px;top:129px;width:187px;height:1px;background:#d6d6d6;"></div><div class="a" style="left:20px;top:142px;width:58px;height:1px;background:#d6d6d6;"></div><div class="a" style="left:232px;top:142px;width:327px;height:1px;background:#d6d6d6;"></div><div class="a" style="left:923px;top:142px;width:33px;height:1px;background:#d6d6d6;"></div><div class="a" style="left:1253px;top:142px;width:187px;height:1px;background:#d6d6d6;"></div><div class="a" style="left:20px;top:155px;width:58px;height:1px;background:#d6d6d6;"></div><div class="a" style="left:232px;top:155px;width:327px;height:1px;background:#d6d6d6;"></div><div class="a" style="left:923px;top:155px;width:33px;height:1px;background:#d6d6d6;"></div><div class="a" style="left:1253px;top:155px;width:187px;height:1px;background:#d6d6d6;"></div><div class="a" style="left:20px;top:168px;width:58px;height:1px;background:#d6d6d6;"></div><div class="a" style="left:232px;top:168px;width:327px;height:1px;background:#d6d6d6;"></div><div class="a" style="left:923px;top:168px;width:33px;height:1px;background:#d6d6d6;"></div><div class="a" style="left:1253px;top:168px;width:187px;height:1px;background:#d6d6d6;"></div><div class="a" style="left:20px;top:181px;width:58px;height:1px;background:#d6d6d6;"></div><div class="a" style="left:232px;top:181px;width:327px;height:1px;background:#d6d6d6;"></div><div class="a" style="left:923px;top:181px;width:33px;height:1px;background:#d6d6d6;"></div><div class="a" style="left:1253px;top:181px;width:187px;height:1px;background:#d6d6d6;"></div><div class="a" style="left:20px;top:194px;width:58px;height:1px;background:#d6d6d6;"></div><div class="a" style="left:232px;top:194px;width:327px;height:1px;background:#d6d6d6;"></div><div class="a" style="left:923px;top:194px;width:33px;height:1px;background:#d6d6d6;"></div><div class="a" style="left:1253px;top:194px;width:187px;height:1px;background:#d6d6d6;"></div><div class="a" style="left:20px;top:207px;width:58px;height:1px;background:#d6d6d6;"></div><div class="a" style="left:232px;top:207px;width:327px;height:1px;background:#d6d6d6;"></div><div class="a" style="left:923px;top:207px;width:33px;height:1px;background:#d6d6d6;"></div><div class="a" style="left:1253px;top:207px;width:187px;height:1px;background:#d6d6d6;"></div><div class="a" style="left:20px;top:220px;width:58px;height:1px;background:#d6d6d6;"></div><div class="a" style="left:232px;top:220px;width:327px;height:1px;background:#d6d6d6;"></div><div class="a" style="left:923px;top:220px;width:33px;height:1px;background:#d6d6d6;"></div><div class="a" style="left:1253px;top:220px;width:187px;height:1px;background:#d6d6d6;"></div><div class="a" style="left:20px;top:233px;width:58px;height:1px;background:#d6d6d6;"></div><div class="a" style="left:232px;top:233px;width:327px;height:1px;background:#d6d6d6;"></div><div class="a" style="left:923px;top:233px;width:33px;height:1px;background:#d6d6d6;"></div><div class="a" style="left:1253px;top:233px;width:187px;height:1px;background:#d6d6d6;"></div><div class="a" style="left:20px;top:246px;width:58px;height:1px;background:#d6d6d6;"></div><div class="a" style="left:232px;top:246px;width:327px;height:1px;background:#d6d6d6;"></div><div class="a" style="left:923px;top:246px;width:33px;height:1px;background:#d6d6d6;"></div><div class="a" style="left:1253px;top:246px;width:187px;height:1px;background:#d6d6d6;"></div><div class="a" style="left:20px;top:259px;width:58px;height:1px;background:#d6d6d6;"></div><div class="a" style="left:232px;top:259px;width:327px;height:1px;background:#d6d6d6;"></div><div class="a" style="left:923px;top:259px;width:33px;height:1px;background:#d6d6d6;"></div><div class="a" style="left:1253px;top:259px;width:187px;height:1px;background:#d6d6d6;"></div><div class="a" style="left:20px;top:272px;width:58px;height:1px;background:#d6d6d6;"></div><div class="a" style="left:232px;top:272px;width:327px;height:1px;background:#d6d6d6;"></div><div class="a" style="left:923px;top:272px;width:33px;height:1px;background:#d6d6d6;"></div><div class="a" style="left:1253px;top:272px;width:187px;height:1px;background:#d6d6d6;"></div><div class="a" style="left:20px;top:285px;width:58px;height:1px;background:#d6d6d6;"></div><div class="a" style="left:232px;top:285px;width:327px;height:1px;background:#d6d6d6;"></div><div class="a" style="left:923px;top:285px;width:33px;height:1px;background:#d6d6d6;"></div><div class="a" style="left:1253px;top:285px;width:187px;height:1px;background:#d6d6d6;"></div><div class="a" style="left:20px;top:298px;width:58px;height:1px;background:#d6d6d6;"></div><div class="a" style="left:232px;top:298px;width:327px;height:1px;background:#d6d6d6;"></div><div class="a" style="left:923px;top:298px;width:33px;height:1px;background:#d6d6d6;"></div><div class="a" style="left:1253px;top:298px;width:187px;height:1px;background:#d6d6d6;"></div><div class="a" style="left:20px;top:311px;width:58px;height:1px;background:#d6d6d6;"></div><div class="a" style="left:232px;top:311px;width:327px;height:1px;background:#d6d6d6;"></div><div class="a" style="left:923px;top:311px;width:33px;height:1px;background:#d6d6d6;"></div><div class="a" style="left:1253px;top:311px;width:187px;height:1px;background:#d6d6d6;"></div><div class="a" style="left:20px;top:324px;width:58px;height:1px;background:#d6d6d6;"></div><div class="a" style="left:232px;top:324px;width:327px;height:1px;background:#d6d6d6;"></div><div class="a" style="left:923px;top:324px;width:33px;height:1px;background:#d6d6d6;"></div><div class="a" style="left:1253px;top:324px;width:187px;height:1px;background:#d6d6d6;"></div><div class="a" style="left:20px;top:337px;width:58px;height:1px;background:#d6d6d6;"></div><div class="a" style="left:232px;top:337px;width:327px;height:1px;background:#d6d6d6;"></div><div class="a" style="left:923px;top:337px;width:33px;height:1px;background:#d6d6d6;"></div><div class="a" style="left:1253px;top:337px;width:187px;height:1px;background:#d6d6d6;"></div><div class="a" style="left:20px;top:350px;width:58px;height:1px;background:#d6d6d6;"></div><div class="a" style="left:232px;top:350px;width:327px;height:1px;background:#d6d6d6;"></div><div class="a" style="left:923px;top:350px;width:33px;height:1px;background:#d6d6d6;"></div><div class="a" style="left:1253px;top:350px;width:187px;height:1px;background:#d6d6d6;"></div><div class="a" style="left:20px;top:363px;width:58px;height:1px;background:#d6d6d6;"></div><div class="a" style="left:232px;top:363px;width:327px;height:1px;background:#d6d6d6;"></div><div class="a" style="left:923px;top:363px;width:33px;height:1px;background:#d6d6d6;"></div><div class="a" style="left:1253px;top:363px;width:187px;height:1px;background:#d6d6d6;"></div><div class="a" style="left:20px;top:376px;width:58px;height:1px;background:#d6d6d6;"></div><div class="a" style="left:232px;top:376px;width:327px;height:1px;background:#d6d6d6;"></div><div class="a" style="left:923px;top:376px;width:33px;height:1px;background:#d6d6d6;"></div><div class="a" style="left:1253px;top:376px;width:187px;height:1px;background:#d6d6d6;"></div><div class="a" style="left:20px;top:389px;width:58px;height:1px;background:#d6d6d6;"></div><div class="a" style="left:232px;top:389px;width:327px;height:1px;background:#d6d6d6;"></div><div class="a" style="left:923px;top:389px;width:33px;height:1px;background:#d6d6d6;"></div><div class="a" style="left:1253px;top:389px;width:187px;height:1px;background:#d6d6d6;"></div><div class="a" style="left:20px;top:402px;width:58px;height:1px;background:#d6d6d6;"></div><div class="a" style="left:232px;top:402px;width:327px;height:1px;background:#d6d6d6;"></div><div class="a" style="left:923px;top:402px;width:33px;height:1px;background:#d6d6d6;"></div><div class="a" style="left:1253px;top:402px;width:187px;height:1px;background:#d6d6d6;"></div><div class="a" style="left:20px;top:415px;width:58px;height:1px;background:#d6d6d6;"></div><div class="a" style="left:232px;top:415px;width:327px;height:1px;background:#d6d6d6;"></div><div class="a" style="left:923px;top:415px;width:33px;height:1px;background:#d6d6d6;"></div><div class="a" style="left:1253px;top:415px;width:187px;height:1px;background:#d6d6d6;"></div><div class="a" style="left:20px;top:428px;width:58px;height:1px;background:#d6d6d6;"></div><div class="a" style="left:232px;top:428px;width:327px;height:1px;background:#d6d6d6;"></div><div class="a" style="left:923px;top:428px;width:33px;height:1px;background:#d6d6d6;"></div><div class="a" style="left:1253px;top:428px;width:187px;height:1px;background:#d6d6d6;"></div><div class="a" style="left:20px;top:441px;width:58px;height:1px;background:#d6d6d6;"></div><div class="a" style="left:232px;top:441px;width:327px;height:1px;background:#d6d6d6;"></div><div class="a" style="left:923px;top:441px;width:33px;height:1px;background:#d6d6d6;"></div><div class="a" style="left:1253px;top:441px;width:187px;height:1px;background:#d6d6d6;"></div><div class="a" style="left:20px;top:454px;width:58px;height:1px;background:#d6d6d6;"></div><div class="a" style="left:232px;top:454px;width:327px;height:1px;background:#d6d6d6;"></div><div class="a" style="left:923px;top:454px;width:33px;height:1px;background:#d6d6d6;"></div><div class="a" style="left:1253px;top:454px;width:187px;height:1px;background:#d6d6d6;"></div><div class="a" style="left:20px;top:467px;width:58px;height:1px;background:#d6d6d6;"></div><div class="a" style="left:232px;top:467px;width:327px;height:1px;background:#d6d6d6;"></div><div class="a" style="left:923px;top:467px;width:33px;height:1px;background:#d6d6d6;"></div><div class="a" style="left:1253px;top:467px;width:187px;height:1px;background:#d6d6d6;"></div><div class="a" style="left:20px;top:480px;width:58px;height:1px;background:#d6d6d6;"></div><div class="a" style="left:232px;top:480px;width:327px;height:1px;background:#d6d6d6;"></div><div class="a" style="left:923px;top:480px;width:33px;height:1px;background:#d6d6d6;"></div><div class="a" style="left:1253px;top:480px;width:187px;height:1px;background:#d6d6d6;"></div><div class="a" style="left:20px;top:493px;width:58px;height:1px;background:#d6d6d6;"></div><div class="a" style="left:232px;top:493px;width:327px;height:1px;background:#d6d6d6;"></div><div class="a" style="left:923px;top:493px;width:33px;height:1px;background:#d6d6d6;"></div><div class="a" style="left:1253px;top:493px;width:187px;height:1px;background:#d6d6d6;"></div><div class="a" style="left:20px;top:506px;width:58px;height:1px;background:#d6d6d6;"></div><div class="a" style="left:232px;top:506px;width:327px;height:1px;background:#d6d6d6;"></div><div class="a" style="left:923px;top:506px;width:33px;height:1px;background:#d6d6d6;"></div><div class="a" style="left:1253px;top:506px;width:187px;height:1px;background:#d6d6d6;"></div><div class="a" style="left:20px;top:519px;width:58px;height:1px;background:#d6d6d6;"></div><div class="a" style="left:232px;top:519px;width:327px;height:1px;background:#d6d6d6;"></div><div class="a" style="left:923px;top:519px;width:33px;height:1px;background:#d6d6d6;"></div><div class="a" style="left:1253px;top:519px;width:187px;height:1px;background:#d6d6d6;"></div><div class="a" style="left:20px;top:532px;width:58px;height:1px;background:#d6d6d6;"></div><div class="a" style="left:232px;top:532px;width:327px;height:1px;background:#d6d6d6;"></div><div class="a" style="left:923px;top:532px;width:33px;height:1px;background:#d6d6d6;"></div><div class="a" style="left:1253px;top:532px;width:187px;height:1px;background:#d6d6d6;"></div><div class="a" style="left:20px;top:545px;width:58px;height:1px;background:#d6d6d6;"></div><div class="a" style="left:232px;top:545px;width:327px;height:1px;background:#d6d6d6;"></div><div class="a" style="left:923px;top:545px;width:33px;height:1px;background:#d6d6d6;"></div><div class="a" style="left:1253px;top:545px;width:187px;height:1px;background:#d6d6d6;"></div><div class="a" style="left:20px;top:558px;width:58px;height:1px;background:#d6d6d6;"></div><div class="a" style="left:232px;top:558px;width:327px;height:1px;background:#d6d6d6;"></div><div class="a" style="left:923px;top:558px;width:33px;height:1px;background:#d6d6d6;"></div><div class="a" style="left:1253px;top:558px;width:187px;height:1px;background:#d6d6d6;"></div><div class="a" style="left:286px;top:90px;width:1px;height:479.5px;background:#d6d6d6;"></div><div class="a" style="left:369px;top:90px;width:1px;height:479.5px;background:#d6d6d6;"></div><div class="a" style="left:396px;top:90px;width:1px;height:479.5px;background:#d6d6d6;"></div><div class="a" style="left:456px;top:90px;width:1px;height:479.5px;background:#d6d6d6;"></div><div class="a" style="left:481px;top:90px;width:1px;height:479.5px;background:#d6d6d6;"></div><div class="a" style="left:507px;top:90px;width:1px;height:479.5px;background:#d6d6d6;"></div><div class="a" style="left:533px;top:90px;width:1px;height:479.5px;background:#d6d6d6;"></div><div class="a" style="left:1287px;top:90px;width:1px;height:479.5px;background:#d6d6d6;"></div><div class="a" style="left:1315px;top:90px;width:1px;height:479.5px;background:#d6d6d6;"></div><div class="a" style="left:1343px;top:90px;width:1px;height:479.5px;background:#d6d6d6;"></div><div class="a" style="left:1395px;top:90px;width:1px;height:479.5px;background:#d6d6d6;"></div><div class="a" style="left:1421px;top:90px;width:1px;height:479.5px;background:#d6d6d6;"></div><div class="a" style="left:78px;top:90px;width:1px;height:479.5px;background:#a6a6a6;"></div><div class="a" style="left:955px;top:90px;width:1px;height:479.5px;background:#d6d6d6;"></div><div class="a" style="left:78px;top:19px;width:1px;height:41px;background:#9a9a9a;"></div><div class="a" style="left:20px;top:46px;width:58px;height:1px;background:#d6d6d6;"></div><div class="a" style="left:232px;top:46px;width:54px;height:1px;background:#d6d6d6;"></div><div class="a" style="left:231px;top:46px;width:1px;height:14px;background:#d6d6d6;"></div><div class="a" style="left:286px;top:46px;width:221px;height:1px;background:#c8c8c8;"></div><div class="a" style="left:923px;top:46px;width:517px;height:1px;background:#c8c8c8;"></div><div class="a" style="left:480px;top:19px;width:1px;height:41px;background:#bbb;"></div><div class="a" style="left:988px;top:19px;width:1px;height:14px;background:#e8e8e8;"></div><div class="a" style="left:1054px;top:19px;width:1px;height:14px;background:#e8e8e8;"></div><div class="a" style="left:1120px;top:19px;width:1px;height:14px;background:#e8e8e8;"></div><div class="a" style="left:1186px;top:19px;width:1px;height:14px;background:#e8e8e8;"></div><div class="a" style="left:1219px;top:19px;width:1px;height:14px;background:#e8e8e8;"></div><div class="a" style="left:78px;top:46px;width:154px;height:1px;background:repeating-linear-gradient(90deg,#000 0 8.500px,transparent 8.500px 11px,#000 11px 14px,transparent 14px 16.500px)"></div><div class="a" style="left:20px;top:59.15px;width:1420px;height:1.7px;background:#000;"></div><div class="a" style="left:20px;top:86.65px;width:1420px;height:1.7px;background:#000;"></div><div class="a" style="left:286px;top:32.15px;width:221px;height:1.7px;background:#000;"></div><div class="a" style="left:923px;top:32.15px;width:517px;height:1.7px;background:#000;"></div><div class="a" style="left:78px;top:73.15px;width:291px;height:1.7px;background:#000;"></div><div class="a" style="left:456px;top:73.15px;width:51px;height:1.7px;background:#000;"></div><div class="a" style="left:20.15px;top:60px;width:1.7px;height:28px;background:#000;"></div><div class="a" style="left:77.15px;top:60px;width:1.7px;height:28px;background:#000;"></div><div class="a" style="left:154.15px;top:60px;width:1.7px;height:28px;background:#000;"></div><div class="a" style="left:231.15px;top:60px;width:1.7px;height:28px;background:#000;"></div><div class="a" style="left:395.15px;top:60px;width:1.7px;height:28px;background:#000;"></div><div class="a" style="left:455.15px;top:60px;width:1.7px;height:28px;background:#000;"></div><div class="a" style="left:506.15px;top:60px;width:1.7px;height:28px;background:#000;"></div><div class="a" style="left:111.15px;top:74px;width:1.7px;height:14px;background:#000;"></div><div class="a" style="left:188.15px;top:74px;width:1.7px;height:14px;background:#000;"></div><div class="a" style="left:285.15px;top:74px;width:1.7px;height:14px;background:#000;"></div><div class="a" style="left:368.15px;top:74px;width:1.7px;height:14px;background:#000;"></div><div class="a" style="left:480.15px;top:74px;width:1.7px;height:14px;background:#000;"></div><div class="a" style="left:285.15px;top:19px;width:1.7px;height:41px;background:#000;"></div><div class="a" style="left:455.15px;top:19px;width:1.7px;height:41px;background:#000;"></div><div class="a" style="left:506.15px;top:19px;width:1.7px;height:41px;background:#000;"></div><div class="a" style="left:955.15px;top:19px;width:1.7px;height:69px;background:#000;"></div><div class="a" style="left:1021.15px;top:19px;width:1.7px;height:69px;background:#000;"></div><div class="a" style="left:1087.15px;top:19px;width:1.7px;height:69px;background:#000;"></div><div class="a" style="left:1153.15px;top:19px;width:1.7px;height:69px;background:#000;"></div><div class="a" style="left:1252.15px;top:19px;width:1.7px;height:69px;background:#000;"></div><div class="a" style="left:1286.15px;top:19px;width:1.7px;height:69px;background:#000;"></div><div class="a" style="left:1314.15px;top:19px;width:1.7px;height:69px;background:#000;"></div><div class="a" style="left:1342.15px;top:19px;width:1.7px;height:69px;background:#000;"></div><div class="a" style="left:1394.15px;top:19px;width:1.7px;height:69px;background:#000;"></div><div class="a" style="left:1420.15px;top:19px;width:1.7px;height:69px;background:#000;"></div><div class="a" style="left:988.15px;top:33px;width:1.7px;height:14px;background:#000;"></div><div class="a" style="left:1054.15px;top:33px;width:1.7px;height:14px;background:#000;"></div><div class="a" style="left:1120.15px;top:33px;width:1.7px;height:14px;background:#000;"></div><div class="a" style="left:1186.15px;top:33px;width:1.7px;height:14px;background:#000;"></div><div class="a" style="left:1219.15px;top:33px;width:1.7px;height:14px;background:#000;"></div><div class="a" style="left:0px;top:89px;width:1440px;height:1px;background:#9b9b9b;"></div><div class="c l" style="left:22px;top:19px;width:210px;height:14px;line-height:15px;">I certify that the entries in this log are true</div><div class="c u ser" style="left:78px;top:44.5px;width:154px;height:14px;line-height:15px;">PILOT'S SIGNATURE</div><div class="c u" style="left:286px;top:19px;width:170px;height:14px;line-height:15px;">TOTAL</div><div class="c u" style="left:286px;top:33px;width:170px;height:13.5px;line-height:14.5px;">TOTAL LAST YEARS</div><div class="c u" style="left:286px;top:46.5px;width:170px;height:13.5px;line-height:14.5px;">THIS YEAR <b>( 2019 )</b></div><div class="c" style="left:456px;top:19px;width:25px;height:14px;line-height:15px;">563</div><div class="c" style="left:481px;top:19px;width:26px;height:14px;line-height:15px;">87</div><div class="c" style="left:456px;top:33px;width:25px;height:13.5px;line-height:14.5px;">373</div><div class="c" style="left:481px;top:33px;width:26px;height:13.5px;line-height:14.5px;">46</div><div class="c" style="left:456px;top:46.5px;width:25px;height:13.5px;line-height:14.5px;">190</div><div class="c" style="left:481px;top:46.5px;width:26px;height:13.5px;line-height:14.5px;">41</div><div class="c" style="left:20px;top:61px;width:58px;height:26px;line-height:27px;">Date</div><div class="c u" style="left:78px;top:61px;width:77px;height:13px;line-height:14px;">DEPARTURE</div><div class="c u" style="left:155px;top:61px;width:77px;height:13px;line-height:14px;">ARRIVAL</div><div class="c" style="left:78px;top:74px;width:34px;height:14px;line-height:15px;">Place</div><div class="c" style="left:112px;top:74px;width:43px;height:14px;line-height:15px;">Time</div><div class="c" style="left:155px;top:74px;width:34px;height:14px;line-height:15px;">Place</div><div class="c" style="left:189px;top:74px;width:43px;height:14px;line-height:15px;">Time</div><div class="c u" style="left:232px;top:61px;width:164px;height:13px;line-height:14px;">AIRCRAFT</div><div class="c u" style="left:232px;top:74px;width:54px;height:14px;line-height:15px;">MODEL</div><div class="c u" style="left:286px;top:74px;width:83px;height:14px;line-height:15px;">REGISTRATION</div><div class="c" style="left:369px;top:74px;width:27px;height:14px;line-height:15px;">Type</div><div class="c" style="left:396px;top:61px;width:60px;height:26px;line-height:27px;">Name PIC</div><div class="c" style="left:456px;top:61px;width:51px;height:13px;line-height:14px;">Take Off</div><div class="c" style="left:456px;top:74px;width:25px;height:14px;line-height:15px;">Day</div><div class="c" style="left:481px;top:74px;width:26px;height:14px;line-height:15px;">Night</div><div class="c" style="left:923px;top:19px;width:33px;height:14px;line-height:15px;">713,9</div><div class="c" style="left:923px;top:33px;width:33px;height:13.5px;line-height:14.5px;">690,9</div><div class="c" style="left:923px;top:46.5px;width:33px;height:13.5px;line-height:14.5px;">23</div><div class="c u" style="left:923px;top:61px;width:33px;height:26px;line-height:27px;">FI</div><div class="c" style="left:956px;top:19px;width:33px;height:14px;line-height:15px;">953,9</div><div class="c" style="left:956px;top:33px;width:33px;height:13.5px;line-height:14.5px;">931</div><div class="c" style="left:956px;top:46.5px;width:33px;height:13.5px;line-height:14.5px;">22,9</div><div class="c" style="left:989px;top:19px;width:33px;height:14px;line-height:15px;">181,1</div><div class="c" style="left:989px;top:33px;width:33px;height:13.5px;line-height:14.5px;">179,5</div><div class="c" style="left:989px;top:46.5px;width:33px;height:13.5px;line-height:14.5px;">1,6</div><div class="c" style="left:1022px;top:19px;width:33px;height:14px;line-height:15px;">106</div><div class="c" style="left:1022px;top:33px;width:33px;height:13.5px;line-height:14.5px;">106</div><div class="c" style="left:1022px;top:46.5px;width:33px;height:13.5px;line-height:14.5px;">0</div><div class="c" style="left:1055px;top:19px;width:33px;height:14px;line-height:15px;">48,2</div><div class="c" style="left:1055px;top:33px;width:33px;height:13.5px;line-height:14.5px;">48,2</div><div class="c" style="left:1055px;top:46.5px;width:33px;height:13.5px;line-height:14.5px;">0</div><div class="c" style="left:1088px;top:19px;width:33px;height:14px;line-height:15px;">656,3</div><div class="c" style="left:1088px;top:33px;width:33px;height:13.5px;line-height:14.5px;">518,1</div><div class="c" style="left:1088px;top:46.5px;width:33px;height:13.5px;line-height:14.5px;">138,2</div><div class="c" style="left:1121px;top:19px;width:33px;height:14px;line-height:15px;">13,2</div><div class="c" style="left:1121px;top:33px;width:33px;height:13.5px;line-height:14.5px;">6,7</div><div class="c" style="left:1121px;top:46.5px;width:33px;height:13.5px;line-height:14.5px;">6,5</div><div class="c" style="left:1154px;top:19px;width:33px;height:14px;line-height:15px;">0</div><div class="c" style="left:1154px;top:33px;width:33px;height:13.5px;line-height:14.5px;">0</div><div class="c" style="left:1154px;top:46.5px;width:33px;height:13.5px;line-height:14.5px;">0</div><div class="c" style="left:1187px;top:19px;width:33px;height:14px;line-height:15px;">1152</div><div class="c" style="left:1187px;top:33px;width:33px;height:13.5px;line-height:14.5px;">967,6</div><div class="c" style="left:1187px;top:46.5px;width:33px;height:13.5px;line-height:14.5px;">184,7</div><div class="c" style="left:1220px;top:19px;width:33px;height:14px;line-height:15px;">12</div><div class="c" style="left:1220px;top:33px;width:33px;height:13.5px;line-height:14.5px;">12</div><div class="c" style="left:1220px;top:46.5px;width:33px;height:13.5px;line-height:14.5px;">0</div><div class="c" style="left:1253px;top:19px;width:34px;height:14px;line-height:15px;">657,9</div><div class="c" style="left:1253px;top:33px;width:34px;height:13.5px;line-height:14.5px;">634,9</div><div class="c" style="left:1253px;top:46.5px;width:34px;height:13.5px;line-height:14.5px;">23</div><div class="c" style="left:1287px;top:19px;width:28px;height:14px;line-height:15px;">16,7</div><div class="c" style="left:1287px;top:33px;width:28px;height:13.5px;line-height:14.5px;">16,7</div><div class="c" style="left:1287px;top:46.5px;width:28px;height:13.5px;line-height:14.5px;">0</div><div class="c" style="left:1315px;top:19px;width:28px;height:14px;line-height:15px;">38,3</div><div class="c" style="left:1315px;top:33px;width:28px;height:13.5px;line-height:14.5px;">38,3</div><div class="c" style="left:1315px;top:46.5px;width:28px;height:13.5px;line-height:14.5px;">0</div><div class="c" style="left:1343px;top:19px;width:52px;height:14px;line-height:15px;">631,15</div><div class="c" style="left:1343px;top:33px;width:52px;height:13.5px;line-height:14.5px;">629,95</div><div class="c" style="left:1343px;top:46.5px;width:52px;height:13.5px;line-height:14.5px;">1,2</div><div class="c" style="left:1395px;top:19px;width:26px;height:14px;line-height:15px;">139</div><div class="c" style="left:1395px;top:33px;width:26px;height:13.5px;line-height:14.5px;">139</div><div class="c" style="left:1395px;top:46.5px;width:26px;height:13.5px;line-height:14.5px;">0</div><div class="c l" style="left:1425px;top:19px;width:35px;height:14px;line-height:15px;">150</div><div class="c l" style="left:1425px;top:33px;width:35px;height:13.5px;line-height:14.5px;">147</div><div class="c l" style="left:1431px;top:46.5px;width:29px;height:13.5px;line-height:14.5px;">35</div><div class="c u" style="left:956px;top:61px;width:66px;height:13px;line-height:14px;">SEP</div><div class="c u" style="left:1022px;top:61px;width:66px;height:13px;line-height:14px;">MEP</div><div class="c u" style="left:1088px;top:61px;width:66px;height:13px;line-height:14px;">SET</div><div class="c u" style="left:1154px;top:61px;width:99px;height:13px;line-height:14px;">MET</div><div class="c u" style="left:956px;top:74px;width:33px;height:14px;line-height:15px;">PIC</div><div class="c u" style="left:989px;top:74px;width:33px;height:14px;line-height:15px;">DUAL</div><div class="c u" style="left:1022px;top:74px;width:33px;height:14px;line-height:15px;">PIC</div><div class="c u" style="left:1055px;top:74px;width:33px;height:14px;line-height:15px;">DUAL</div><div class="c u" style="left:1088px;top:74px;width:33px;height:14px;line-height:15px;">PIC</div><div class="c u" style="left:1121px;top:74px;width:33px;height:14px;line-height:15px;">DUAL</div><div class="c u" style="left:1154px;top:74px;width:33px;height:14px;line-height:15px;">PIC</div><div class="c u" style="left:1187px;top:74px;width:33px;height:14px;line-height:15px;">SIC</div><div class="c u" style="left:1220px;top:74px;width:33px;height:14px;line-height:15px;">DUAL</div><div class="c u" style="left:1253px;top:61px;width:34px;height:26px;line-height:27px;">FI PPL</div><div class="c u" style="left:1287px;top:61px;width:28px;height:26px;line-height:27px;">IRI</div><div class="c u" style="left:1315px;top:61px;width:28px;height:26px;line-height:27px;">CRI</div><div class="c" style="left:1343px;top:61px;width:52px;height:26px;line-height:27px;">Tail wheel</div><div class="c u" style="left:1395px;top:61px;width:26px;height:26px;line-height:27px;">CX</div><div class="c u l" style="left:1428px;top:61px;width:32px;height:26px;line-height:27px;">RO</div><div class="c" style="left:20px;top:90.5px;width:58px;height:13px;line-height:12px;">4-août</div><div class="c u" style="left:78px;top:90.5px;width:34px;height:13px;line-height:12px;">FEFF</div><div class="c" style="left:112px;top:90.5px;width:43px;height:13px;line-height:12px;">6:30</div><div class="c u" style="left:155px;top:90.5px;width:34px;height:13px;line-height:12px;">FEFC</div><div class="c" style="left:189px;top:90.5px;width:43px;height:13px;line-height:12px;">7:36</div><div class="c" style="left:456px;top:90.5px;width:25px;height:13px;line-height:12px;">1</div><div class="c" style="left:507px;top:90.5px;width:26px;height:13px;line-height:12px;">1</div><div class="c" style="left:559px;top:90.5px;width:39px;height:13px;line-height:12px;">1,1</div><div class="c" style="left:668px;top:90.5px;width:31px;height:13px;line-height:12px;">1,1</div><div class="c" style="left:813px;top:90.5px;width:42px;height:13px;line-height:12px;">1,1</div><div class="c" style="left:1088px;top:90.5px;width:33px;height:13px;line-height:12px;">1,1</div><div class="c u" style="left:232px;top:90.5px;width:54px;height:13px;line-height:12px;">C_208</div><div class="c u" style="left:286px;top:90.5px;width:83px;height:13px;line-height:12px;">F-OJJC</div><div class="c u" style="left:369px;top:90.5px;width:27px;height:13px;line-height:12px;">SE</div><div class="c u" style="left:396px;top:90.5px;width:60px;height:13px;line-height:12px;">SELF</div><div class="a tri" style="left:508px;top:90.5px"></div><div class="c" style="left:20px;top:103.5px;width:58px;height:13px;line-height:12px;">4-août</div><div class="c u" style="left:78px;top:103.5px;width:34px;height:13px;line-height:12px;">FEFC</div><div class="c" style="left:112px;top:103.5px;width:43px;height:13px;line-height:12px;">10:00</div><div class="c u" style="left:155px;top:103.5px;width:34px;height:13px;line-height:12px;">FEFF</div><div class="c" style="left:189px;top:103.5px;width:43px;height:13px;line-height:12px;">11:06</div><div class="c" style="left:456px;top:103.5px;width:25px;height:13px;line-height:12px;">1</div><div class="c" style="left:507px;top:103.5px;width:26px;height:13px;line-height:12px;">1</div><div class="c" style="left:559px;top:103.5px;width:39px;height:13px;line-height:12px;">1,1</div><div class="c" style="left:668px;top:103.5px;width:31px;height:13px;line-height:12px;">1,1</div><div class="c" style="left:813px;top:103.5px;width:42px;height:13px;line-height:12px;">1,1</div><div class="c" style="left:1088px;top:103.5px;width:33px;height:13px;line-height:12px;">1,1</div><div class="c u" style="left:232px;top:103.5px;width:54px;height:13px;line-height:12px;">C_208</div><div class="c u" style="left:286px;top:103.5px;width:83px;height:13px;line-height:12px;">F-OJJC</div><div class="c u" style="left:369px;top:103.5px;width:27px;height:13px;line-height:12px;">SE</div><div class="c u" style="left:396px;top:103.5px;width:60px;height:13px;line-height:12px;">SELF</div><div class="a tri" style="left:508px;top:103.5px"></div><div class="c" style="left:20px;top:116.5px;width:58px;height:13px;line-height:12px;">5-août</div><div class="c u" style="left:78px;top:116.5px;width:34px;height:13px;line-height:12px;">FEFF</div><div class="c" style="left:112px;top:116.5px;width:43px;height:13px;line-height:12px;">6:30</div><div class="c u" style="left:155px;top:116.5px;width:34px;height:13px;line-height:12px;">FEGC</div><div class="c" style="left:189px;top:116.5px;width:43px;height:13px;line-height:12px;">8:06</div><div class="c" style="left:456px;top:116.5px;width:25px;height:13px;line-height:12px;">1</div><div class="c" style="left:507px;top:116.5px;width:26px;height:13px;line-height:12px;">1</div><div class="c" style="left:559px;top:116.5px;width:39px;height:13px;line-height:12px;">1,6</div><div class="c" style="left:668px;top:116.5px;width:31px;height:13px;line-height:12px;">1,6</div><div class="c" style="left:813px;top:116.5px;width:42px;height:13px;line-height:12px;">1,6</div><div class="c" style="left:1088px;top:116.5px;width:33px;height:13px;line-height:12px;">1,6</div><div class="c u" style="left:232px;top:116.5px;width:54px;height:13px;line-height:12px;">C_208</div><div class="c u" style="left:286px;top:116.5px;width:83px;height:13px;line-height:12px;">F-OJJC</div><div class="c u" style="left:369px;top:116.5px;width:27px;height:13px;line-height:12px;">SE</div><div class="c u" style="left:396px;top:116.5px;width:60px;height:13px;line-height:12px;">SELF</div><div class="a tri" style="left:508px;top:116.5px"></div><div class="c" style="left:20px;top:129.5px;width:58px;height:13px;line-height:12px;">5-août</div><div class="c u" style="left:78px;top:129.5px;width:34px;height:13px;line-height:12px;">FEGC</div><div class="c" style="left:112px;top:129.5px;width:43px;height:13px;line-height:12px;">9:00</div><div class="c u" style="left:155px;top:129.5px;width:34px;height:13px;line-height:12px;">FEFF</div><div class="c" style="left:189px;top:129.5px;width:43px;height:13px;line-height:12px;">10:36</div><div class="c" style="left:456px;top:129.5px;width:25px;height:13px;line-height:12px;">1</div><div class="c" style="left:507px;top:129.5px;width:26px;height:13px;line-height:12px;">1</div><div class="c" style="left:559px;top:129.5px;width:39px;height:13px;line-height:12px;">1,6</div><div class="c" style="left:668px;top:129.5px;width:31px;height:13px;line-height:12px;">1,6</div><div class="c" style="left:813px;top:129.5px;width:42px;height:13px;line-height:12px;">1,6</div><div class="c" style="left:1088px;top:129.5px;width:33px;height:13px;line-height:12px;">1,6</div><div class="c u" style="left:232px;top:129.5px;width:54px;height:13px;line-height:12px;">C_208</div><div class="c u" style="left:286px;top:129.5px;width:83px;height:13px;line-height:12px;">F-OJJC</div><div class="c u" style="left:369px;top:129.5px;width:27px;height:13px;line-height:12px;">SE</div><div class="c u" style="left:396px;top:129.5px;width:60px;height:13px;line-height:12px;">SELF</div><div class="a tri" style="left:508px;top:129.5px"></div><div class="c" style="left:20px;top:142.5px;width:58px;height:13px;line-height:12px;">5-août</div><div class="c u" style="left:78px;top:142.5px;width:34px;height:13px;line-height:12px;">FEFF</div><div class="c" style="left:112px;top:142.5px;width:43px;height:13px;line-height:12px;">11:00</div><div class="c u" style="left:155px;top:142.5px;width:34px;height:13px;line-height:12px;">FEFA</div><div class="c" style="left:189px;top:142.5px;width:43px;height:13px;line-height:12px;">12:12</div><div class="c" style="left:456px;top:142.5px;width:25px;height:13px;line-height:12px;">1</div><div class="c" style="left:507px;top:142.5px;width:26px;height:13px;line-height:12px;">1</div><div class="c" style="left:559px;top:142.5px;width:39px;height:13px;line-height:12px;">1,2</div><div class="c" style="left:668px;top:142.5px;width:31px;height:13px;line-height:12px;">1,2</div><div class="c" style="left:813px;top:142.5px;width:42px;height:13px;line-height:12px;">1,2</div><div class="c" style="left:1088px;top:142.5px;width:33px;height:13px;line-height:12px;">1,2</div><div class="c u" style="left:232px;top:142.5px;width:54px;height:13px;line-height:12px;">C_208</div><div class="c u" style="left:286px;top:142.5px;width:83px;height:13px;line-height:12px;">F-OJJC</div><div class="c u" style="left:369px;top:142.5px;width:27px;height:13px;line-height:12px;">SE</div><div class="c u" style="left:396px;top:142.5px;width:60px;height:13px;line-height:12px;">SELF</div><div class="a tri" style="left:508px;top:142.5px"></div><div class="c" style="left:20px;top:155.5px;width:58px;height:13px;line-height:12px;">5-août</div><div class="c u" style="left:78px;top:155.5px;width:34px;height:13px;line-height:12px;">FEFA</div><div class="c" style="left:112px;top:155.5px;width:43px;height:13px;line-height:12px;">13:00</div><div class="c u" style="left:155px;top:155.5px;width:34px;height:13px;line-height:12px;">FEFF</div><div class="c" style="left:189px;top:155.5px;width:43px;height:13px;line-height:12px;">14:12</div><div class="c" style="left:456px;top:155.5px;width:25px;height:13px;line-height:12px;">1</div><div class="c" style="left:507px;top:155.5px;width:26px;height:13px;line-height:12px;">1</div><div class="c" style="left:559px;top:155.5px;width:39px;height:13px;line-height:12px;">1,2</div><div class="c" style="left:668px;top:155.5px;width:31px;height:13px;line-height:12px;">1,2</div><div class="c" style="left:813px;top:155.5px;width:42px;height:13px;line-height:12px;">1,2</div><div class="c" style="left:1088px;top:155.5px;width:33px;height:13px;line-height:12px;">1,2</div><div class="c u" style="left:232px;top:155.5px;width:54px;height:13px;line-height:12px;">C_208</div><div class="c u" style="left:286px;top:155.5px;width:83px;height:13px;line-height:12px;">F-OJJC</div><div class="c u" style="left:369px;top:155.5px;width:27px;height:13px;line-height:12px;">SE</div><div class="c u" style="left:396px;top:155.5px;width:60px;height:13px;line-height:12px;">SELF</div><div class="a tri" style="left:508px;top:155.5px"></div><div class="c" style="left:20px;top:168.5px;width:58px;height:13px;line-height:12px;">6-août</div><div class="c u" style="left:78px;top:168.5px;width:34px;height:13px;line-height:12px;">FEFF</div><div class="c" style="left:112px;top:168.5px;width:43px;height:13px;line-height:12px;">6:30</div><div class="c u" style="left:155px;top:168.5px;width:34px;height:13px;line-height:12px;">FEFN</div><div class="c" style="left:189px;top:168.5px;width:43px;height:13px;line-height:12px;">8:24</div><div class="c" style="left:456px;top:168.5px;width:25px;height:13px;line-height:12px;">1</div><div class="c" style="left:507px;top:168.5px;width:26px;height:13px;line-height:12px;">1</div><div class="c" style="left:559px;top:168.5px;width:39px;height:13px;line-height:12px;">1,9</div><div class="c" style="left:668px;top:168.5px;width:31px;height:13px;line-height:12px;">1,9</div><div class="c" style="left:813px;top:168.5px;width:42px;height:13px;line-height:12px;">1,9</div><div class="c" style="left:1088px;top:168.5px;width:33px;height:13px;line-height:12px;">1,9</div><div class="c u" style="left:232px;top:168.5px;width:54px;height:13px;line-height:12px;">C_208</div><div class="c u" style="left:286px;top:168.5px;width:83px;height:13px;line-height:12px;">F-OJJC</div><div class="c u" style="left:369px;top:168.5px;width:27px;height:13px;line-height:12px;">SE</div><div class="c u" style="left:396px;top:168.5px;width:60px;height:13px;line-height:12px;">SELF</div><div class="a tri" style="left:508px;top:168.5px"></div><div class="c" style="left:20px;top:181.5px;width:58px;height:13px;line-height:12px;">6-août</div><div class="c u" style="left:78px;top:181.5px;width:34px;height:13px;line-height:12px;">FEFN</div><div class="c" style="left:112px;top:181.5px;width:43px;height:13px;line-height:12px;">9:00</div><div class="c u" style="left:155px;top:181.5px;width:34px;height:13px;line-height:12px;">FEFF</div><div class="c" style="left:189px;top:181.5px;width:43px;height:13px;line-height:12px;">10:54</div><div class="c" style="left:456px;top:181.5px;width:25px;height:13px;line-height:12px;">1</div><div class="c" style="left:507px;top:181.5px;width:26px;height:13px;line-height:12px;">1</div><div class="c" style="left:559px;top:181.5px;width:39px;height:13px;line-height:12px;">1,9</div><div class="c" style="left:668px;top:181.5px;width:31px;height:13px;line-height:12px;">1,9</div><div class="c" style="left:813px;top:181.5px;width:42px;height:13px;line-height:12px;">1,9</div><div class="c" style="left:1088px;top:181.5px;width:33px;height:13px;line-height:12px;">1,9</div><div class="c u" style="left:232px;top:181.5px;width:54px;height:13px;line-height:12px;">C_208</div><div class="c u" style="left:286px;top:181.5px;width:83px;height:13px;line-height:12px;">F-OJJC</div><div class="c u" style="left:369px;top:181.5px;width:27px;height:13px;line-height:12px;">SE</div><div class="c u" style="left:396px;top:181.5px;width:60px;height:13px;line-height:12px;">SELF</div><div class="a tri" style="left:508px;top:181.5px"></div><div class="c" style="left:20px;top:194.5px;width:58px;height:13px;line-height:12px;">11-août</div><div class="c u" style="left:78px;top:194.5px;width:34px;height:13px;line-height:12px;">KMIA</div><div class="c" style="left:112px;top:194.5px;width:43px;height:13px;line-height:12px;">8:42</div><div class="c u" style="left:155px;top:194.5px;width:34px;height:13px;line-height:12px;">LFPO</div><div class="c" style="left:189px;top:194.5px;width:43px;height:13px;line-height:12px;">16:42</div><div class="c" style="left:481px;top:194.5px;width:26px;height:13px;line-height:12px;">1</div><div class="c" style="left:507px;top:194.5px;width:26px;height:13px;line-height:12px;">1</div><div class="c" style="left:559px;top:194.5px;width:39px;height:13px;line-height:12px;">8</div><div class="c" style="left:668px;top:194.5px;width:31px;height:13px;line-height:12px;">8</div><div class="c" style="left:813px;top:194.5px;width:42px;height:13px;line-height:12px;">8</div><div class="c" style="left:1088px;top:194.5px;width:33px;height:13px;line-height:12px;">8</div><div class="c u" style="left:232px;top:194.5px;width:54px;height:13px;line-height:12px;">C_208</div><div class="c u" style="left:286px;top:194.5px;width:83px;height:13px;line-height:12px;">F-OJJC</div><div class="c u" style="left:369px;top:194.5px;width:27px;height:13px;line-height:12px;">SE</div><div class="c u" style="left:396px;top:194.5px;width:60px;height:13px;line-height:12px;">SELF</div><div class="a tri" style="left:508px;top:194.5px"></div><div class="c" style="left:20px;top:207.5px;width:58px;height:13px;line-height:12px;">21-juin</div><div class="c u" style="left:78px;top:207.5px;width:34px;height:13px;line-height:12px;">LFPO</div><div class="c" style="left:112px;top:207.5px;width:43px;height:13px;line-height:12px;">20:10</div><div class="c u" style="left:155px;top:207.5px;width:34px;height:13px;line-height:12px;">KJFK</div><div class="c" style="left:189px;top:207.5px;width:43px;height:13px;line-height:12px;">9:10</div><div class="c" style="left:456px;top:207.5px;width:25px;height:13px;line-height:12px;">1</div><div class="c" style="left:507px;top:207.5px;width:26px;height:13px;line-height:12px;">1</div><div class="c" style="left:559px;top:207.5px;width:39px;height:13px;line-height:12px;">13</div><div class="c" style="left:668px;top:207.5px;width:31px;height:13px;line-height:12px;">13</div><div class="c" style="left:813px;top:207.5px;width:42px;height:13px;line-height:12px;">13</div><div class="c" style="left:1088px;top:207.5px;width:33px;height:13px;line-height:12px;">13</div><div class="c u" style="left:232px;top:207.5px;width:54px;height:13px;line-height:12px;">C_208</div><div class="c u" style="left:286px;top:207.5px;width:83px;height:13px;line-height:12px;">F-OJJC</div><div class="c u" style="left:369px;top:207.5px;width:27px;height:13px;line-height:12px;">SE</div><div class="c u" style="left:396px;top:207.5px;width:60px;height:13px;line-height:12px;">SELF</div><div class="a tri" style="left:508px;top:207.5px"></div><div class="c" style="left:189px;top:220.5px;width:43px;height:13px;line-height:12px;">0:00</div><div class="c" style="left:481px;top:220.5px;width:26px;height:13px;line-height:12px;">1</div><div class="c" style="left:533px;top:220.5px;width:26px;height:13px;line-height:12px;">1</div><div class="c u" style="left:232px;top:220.5px;width:54px;height:13px;line-height:12px;">C_208</div><div class="c u" style="left:286px;top:220.5px;width:83px;height:13px;line-height:12px;">F-OJJC</div><div class="c u" style="left:369px;top:220.5px;width:27px;height:13px;line-height:12px;">SE</div><div class="c u" style="left:396px;top:220.5px;width:60px;height:13px;line-height:12px;">SELF</div><div class="a tri" style="left:508px;top:220.5px"></div><div class="c" style="left:189px;top:233.5px;width:43px;height:13px;line-height:12px;">0:00</div><div class="c" style="left:481px;top:233.5px;width:26px;height:13px;line-height:12px;">1</div><div class="c" style="left:533px;top:233.5px;width:26px;height:13px;line-height:12px;">1</div><div class="c u" style="left:232px;top:233.5px;width:54px;height:13px;line-height:12px;">C_208</div><div class="c u" style="left:286px;top:233.5px;width:83px;height:13px;line-height:12px;">F-OJJC</div><div class="c u" style="left:369px;top:233.5px;width:27px;height:13px;line-height:12px;">SE</div><div class="c u" style="left:396px;top:233.5px;width:60px;height:13px;line-height:12px;">SELF</div><div class="a tri" style="left:508px;top:233.5px"></div><div class="c" style="left:189px;top:246.5px;width:43px;height:13px;line-height:12px;">0:00</div><div class="c u" style="left:232px;top:246.5px;width:54px;height:13px;line-height:12px;">C_208</div><div class="c u" style="left:286px;top:246.5px;width:83px;height:13px;line-height:12px;">F-OJJC</div><div class="c u" style="left:369px;top:246.5px;width:27px;height:13px;line-height:12px;">SE</div><div class="c u" style="left:396px;top:246.5px;width:60px;height:13px;line-height:12px;">SELF</div><div class="c" style="left:189px;top:259.5px;width:43px;height:13px;line-height:12px;">0:00</div><div class="c u" style="left:232px;top:259.5px;width:54px;height:13px;line-height:12px;">C_208</div><div class="c u" style="left:286px;top:259.5px;width:83px;height:13px;line-height:12px;">F-OJJC</div><div class="c u" style="left:369px;top:259.5px;width:27px;height:13px;line-height:12px;">SE</div><div class="c u" style="left:396px;top:259.5px;width:60px;height:13px;line-height:12px;">SELF</div><div class="c" style="left:189px;top:272.5px;width:43px;height:13px;line-height:12px;">0:00</div><div class="c u" style="left:232px;top:272.5px;width:54px;height:13px;line-height:12px;">C_208</div><div class="c u" style="left:286px;top:272.5px;width:83px;height:13px;line-height:12px;">F-OJJC</div><div class="c u" style="left:369px;top:272.5px;width:27px;height:13px;line-height:12px;">SE</div><div class="c u" style="left:396px;top:272.5px;width:60px;height:13px;line-height:12px;">SELF</div><div class="c" style="left:189px;top:285.5px;width:43px;height:13px;line-height:12px;">0:00</div><div class="c u" style="left:232px;top:285.5px;width:54px;height:13px;line-height:12px;">C_208</div><div class="c u" style="left:286px;top:285.5px;width:83px;height:13px;line-height:12px;">F-OJJC</div><div class="c u" style="left:369px;top:285.5px;width:27px;height:13px;line-height:12px;">SE</div><div class="c u" style="left:396px;top:285.5px;width:60px;height:13px;line-height:12px;">SELF</div><div class="c" style="left:189px;top:298.5px;width:43px;height:13px;line-height:12px;">0:00</div><div class="c u" style="left:232px;top:298.5px;width:54px;height:13px;line-height:12px;">C_208</div><div class="c u" style="left:286px;top:298.5px;width:83px;height:13px;line-height:12px;">F-OJJC</div><div class="c u" style="left:369px;top:298.5px;width:27px;height:13px;line-height:12px;">SE</div><div class="c u" style="left:396px;top:298.5px;width:60px;height:13px;line-height:12px;">SELF</div><div class="c" style="left:189px;top:311.5px;width:43px;height:13px;line-height:12px;">0:00</div><div class="c u" style="left:232px;top:311.5px;width:54px;height:13px;line-height:12px;">C_208</div><div class="c u" style="left:286px;top:311.5px;width:83px;height:13px;line-height:12px;">F-OJJC</div><div class="c u" style="left:369px;top:311.5px;width:27px;height:13px;line-height:12px;">SE</div><div class="c u" style="left:396px;top:311.5px;width:60px;height:13px;line-height:12px;">SELF</div><div class="c u" style="left:232px;top:324.5px;width:54px;height:13px;line-height:12px;">C_208</div><div class="c u" style="left:286px;top:324.5px;width:83px;height:13px;line-height:12px;">F-OJJC</div><div class="c u" style="left:369px;top:324.5px;width:27px;height:13px;line-height:12px;">SE</div><div class="c u" style="left:396px;top:324.5px;width:60px;height:13px;line-height:12px;">SELF</div><div class="c u" style="left:232px;top:337.5px;width:54px;height:13px;line-height:12px;">C_208</div><div class="c u" style="left:286px;top:337.5px;width:83px;height:13px;line-height:12px;">F-OJJC</div><div class="c u" style="left:369px;top:337.5px;width:27px;height:13px;line-height:12px;">SE</div><div class="c u" style="left:396px;top:337.5px;width:60px;height:13px;line-height:12px;">SELF</div><div class="c u" style="left:232px;top:350.5px;width:54px;height:13px;line-height:12px;">C_208</div><div class="c u" style="left:286px;top:350.5px;width:83px;height:13px;line-height:12px;">F-OJJC</div><div class="c u" style="left:369px;top:350.5px;width:27px;height:13px;line-height:12px;">SE</div><div class="c u" style="left:396px;top:350.5px;width:60px;height:13px;line-height:12px;">SELF</div><div class="c u" style="left:232px;top:363.5px;width:54px;height:13px;line-height:12px;">C_208</div><div class="c u" style="left:286px;top:363.5px;width:83px;height:13px;line-height:12px;">F-OJJC</div><div class="c u" style="left:369px;top:363.5px;width:27px;height:13px;line-height:12px;">SE</div><div class="c u" style="left:396px;top:363.5px;width:60px;height:13px;line-height:12px;">SELF</div><div class="c u" style="left:232px;top:376.5px;width:54px;height:13px;line-height:12px;">C_208</div><div class="c u" style="left:286px;top:376.5px;width:83px;height:13px;line-height:12px;">F-OJJC</div><div class="c u" style="left:369px;top:376.5px;width:27px;height:13px;line-height:12px;">SE</div><div class="c u" style="left:396px;top:376.5px;width:60px;height:13px;line-height:12px;">SELF</div><div class="c u" style="left:232px;top:389.5px;width:54px;height:13px;line-height:12px;">C_208</div><div class="c u" style="left:286px;top:389.5px;width:83px;height:13px;line-height:12px;">F-OJJC</div><div class="c u" style="left:369px;top:389.5px;width:27px;height:13px;line-height:12px;">SE</div><div class="c u" style="left:396px;top:389.5px;width:60px;height:13px;line-height:12px;">SELF</div><div class="c u" style="left:232px;top:402.5px;width:54px;height:13px;line-height:12px;">C_208</div><div class="c u" style="left:286px;top:402.5px;width:83px;height:13px;line-height:12px;">F-OJJC</div><div class="c u" style="left:369px;top:402.5px;width:27px;height:13px;line-height:12px;">SE</div><div class="c u" style="left:396px;top:402.5px;width:60px;height:13px;line-height:12px;">SELF</div><div class="c u" style="left:232px;top:415.5px;width:54px;height:13px;line-height:12px;">C_208</div><div class="c u" style="left:286px;top:415.5px;width:83px;height:13px;line-height:12px;">F-OJJC</div><div class="c u" style="left:369px;top:415.5px;width:27px;height:13px;line-height:12px;">SE</div><div class="c u" style="left:396px;top:415.5px;width:60px;height:13px;line-height:12px;">SELF</div><div class="c u" style="left:232px;top:428.5px;width:54px;height:13px;line-height:12px;">C_208</div><div class="c u" style="left:286px;top:428.5px;width:83px;height:13px;line-height:12px;">F-OJJC</div><div class="c u" style="left:369px;top:428.5px;width:27px;height:13px;line-height:12px;">SE</div><div class="c u" style="left:396px;top:428.5px;width:60px;height:13px;line-height:12px;">SELF</div><div class="c u" style="left:232px;top:441.5px;width:54px;height:13px;line-height:12px;">C_208</div><div class="c u" style="left:286px;top:441.5px;width:83px;height:13px;line-height:12px;">F-OJJC</div><div class="c u" style="left:369px;top:441.5px;width:27px;height:13px;line-height:12px;">SE</div><div class="c u" style="left:396px;top:441.5px;width:60px;height:13px;line-height:12px;">SELF</div><div class="c u" style="left:232px;top:454.5px;width:54px;height:13px;line-height:12px;">C_208</div><div class="c u" style="left:286px;top:454.5px;width:83px;height:13px;line-height:12px;">F-OJJC</div><div class="c u" style="left:369px;top:454.5px;width:27px;height:13px;line-height:12px;">SE</div><div class="c u" style="left:396px;top:454.5px;width:60px;height:13px;line-height:12px;">SELF</div><div class="c u" style="left:232px;top:467.5px;width:54px;height:13px;line-height:12px;">C_208</div><div class="c u" style="left:286px;top:467.5px;width:83px;height:13px;line-height:12px;">F-OJJC</div><div class="c u" style="left:369px;top:467.5px;width:27px;height:13px;line-height:12px;">SE</div><div class="c u" style="left:396px;top:467.5px;width:60px;height:13px;line-height:12px;">SELF</div><div class="c u" style="left:232px;top:480.5px;width:54px;height:13px;line-height:12px;">C_208</div><div class="c u" style="left:286px;top:480.5px;width:83px;height:13px;line-height:12px;">F-OJJC</div><div class="c u" style="left:369px;top:480.5px;width:27px;height:13px;line-height:12px;">SE</div><div class="c u" style="left:396px;top:480.5px;width:60px;height:13px;line-height:12px;">SELF</div><div class="c u" style="left:232px;top:493.5px;width:54px;height:13px;line-height:12px;">C_208</div><div class="c u" style="left:286px;top:493.5px;width:83px;height:13px;line-height:12px;">F-OJJC</div><div class="c u" style="left:369px;top:493.5px;width:27px;height:13px;line-height:12px;">SE</div><div class="c u" style="left:396px;top:493.5px;width:60px;height:13px;line-height:12px;">SELF</div><div class="c u" style="left:232px;top:506.5px;width:54px;height:13px;line-height:12px;">C_208</div><div class="c u" style="left:286px;top:506.5px;width:83px;height:13px;line-height:12px;">F-OJJC</div><div class="c u" style="left:369px;top:506.5px;width:27px;height:13px;line-height:12px;">SE</div><div class="c u" style="left:396px;top:506.5px;width:60px;height:13px;line-height:12px;">SELF</div><div class="c u" style="left:232px;top:519.5px;width:54px;height:13px;line-height:12px;">C_208</div><div class="c u" style="left:286px;top:519.5px;width:83px;height:13px;line-height:12px;">F-OJJC</div><div class="c u" style="left:369px;top:519.5px;width:27px;height:13px;line-height:12px;">SE</div><div class="c u" style="left:396px;top:519.5px;width:60px;height:13px;line-height:12px;">SELF</div><div class="c u" style="left:232px;top:532.5px;width:54px;height:13px;line-height:12px;">C_208</div><div class="c u" style="left:286px;top:532.5px;width:83px;height:13px;line-height:12px;">F-OJJC</div><div class="c u" style="left:369px;top:532.5px;width:27px;height:13px;line-height:12px;">SE</div><div class="c u" style="left:396px;top:532.5px;width:60px;height:13px;line-height:12px;">SELF</div><div class="c u" style="left:232px;top:545.5px;width:54px;height:13px;line-height:12px;">C_208</div><div class="c u" style="left:286px;top:545.5px;width:83px;height:13px;line-height:12px;">F-OJJC</div><div class="c u" style="left:369px;top:545.5px;width:27px;height:13px;line-height:12px;">SE</div><div class="c u" style="left:396px;top:545.5px;width:60px;height:13px;line-height:12px;">SELF</div><div class="c u" style="left:232px;top:558.5px;width:54px;height:13px;line-height:12px;">C_208</div><div class="c u" style="left:286px;top:558.5px;width:83px;height:13px;line-height:12px;">F-OJJC</div><div class="c u" style="left:369px;top:558.5px;width:27px;height:13px;line-height:12px;">SE</div><div class="c u" style="left:396px;top:558.5px;width:60px;height:13px;line-height:12px;">SELF</div><div class="c" style="left:741px;top:194.5px;width:34px;height:13px;line-height:12px;">1,1</div><div class="c" style="left:741px;top:207.5px;width:34px;height:13px;line-height:12px;">11,4</div><div class="a" style="left:20px;top:219.5px;width:59px;height:14px;background:#fff;border:2px solid #1e7145"></div><div class="c l" style="left:21px;top:220.5px;width:57px;height:13px;line-height:12px;">21/01</div><div class="a" style="left:76px;top:231.5px;width:5px;height:5px;background:#1e7145;border:1px solid #fff"></div><div class="a" style="left:0px;top:1px;width:20px;height:568.5px;background:#f4f4f4;border-right:1px solid #cfcfcf"></div><div class="c rh" style="left:0px;top:19px;width:20px;height:14px;line-height:15px;color:#222;">1</div><div class="a" style="left:0px;top:32px;width:20px;height:1px;background:#dedede;"></div><div class="c rh" style="left:0px;top:33px;width:20px;height:13.5px;line-height:14.5px;color:#222;">2</div><div class="a" style="left:0px;top:46px;width:20px;height:1px;background:#dedede;"></div><div class="c rh" style="left:0px;top:46.5px;width:20px;height:13.5px;line-height:14.5px;color:#222;">3</div><div class="a" style="left:0px;top:59px;width:20px;height:1px;background:#dedede;"></div><div class="c rh" style="left:0px;top:60px;width:20px;height:14px;line-height:15px;color:#222;">4</div><div class="a" style="left:0px;top:73px;width:20px;height:1px;background:#dedede;"></div><div class="c rh" style="left:0px;top:74px;width:20px;height:14px;line-height:15px;color:#222;">5</div><div class="a" style="left:0px;top:87px;width:20px;height:1px;background:#dedede;"></div><div class="c rh" style="left:0px;top:90.5px;width:20px;height:13px;line-height:12px;color:#222;">225</div><div class="a" style="left:0px;top:103px;width:20px;height:1px;background:#dedede;"></div><div class="c rh" style="left:0px;top:103.5px;width:20px;height:13px;line-height:12px;color:#222;">226</div><div class="a" style="left:0px;top:116px;width:20px;height:1px;background:#dedede;"></div><div class="c rh" style="left:0px;top:116.5px;width:20px;height:13px;line-height:12px;color:#222;">227</div><div class="a" style="left:0px;top:129px;width:20px;height:1px;background:#dedede;"></div><div class="c rh" style="left:0px;top:129.5px;width:20px;height:13px;line-height:12px;color:#222;">228</div><div class="a" style="left:0px;top:142px;width:20px;height:1px;background:#dedede;"></div><div class="c rh" style="left:0px;top:142.5px;width:20px;height:13px;line-height:12px;color:#222;">229</div><div class="a" style="left:0px;top:155px;width:20px;height:1px;background:#dedede;"></div><div class="c rh" style="left:0px;top:155.5px;width:20px;height:13px;line-height:12px;color:#222;">230</div><div class="a" style="left:0px;top:168px;width:20px;height:1px;background:#dedede;"></div><div class="c rh" style="left:0px;top:168.5px;width:20px;height:13px;line-height:12px;color:#222;">231</div><div class="a" style="left:0px;top:181px;width:20px;height:1px;background:#dedede;"></div><div class="c rh" style="left:0px;top:181.5px;width:20px;height:13px;line-height:12px;color:#222;">232</div><div class="a" style="left:0px;top:194px;width:20px;height:1px;background:#dedede;"></div><div class="c rh" style="left:0px;top:194.5px;width:20px;height:13px;line-height:12px;color:#222;">233</div><div class="a" style="left:0px;top:207px;width:20px;height:1px;background:#dedede;"></div><div class="c rh" style="left:0px;top:207.5px;width:20px;height:13px;line-height:12px;color:#222;">234</div><div class="a" style="left:0px;top:220px;width:20px;height:1px;background:#dedede;"></div><div class="c rh" style="left:0px;top:220.5px;width:20px;height:13px;line-height:12px;color:#1e7145;">235</div><div class="a" style="left:0px;top:233px;width:20px;height:1px;background:#dedede;"></div><div class="c rh" style="left:0px;top:233.5px;width:20px;height:13px;line-height:12px;color:#222;">236</div><div class="a" style="left:0px;top:246px;width:20px;height:1px;background:#dedede;"></div><div class="c rh" style="left:0px;top:246.5px;width:20px;height:13px;line-height:12px;color:#222;">237</div><div class="a" style="left:0px;top:259px;width:20px;height:1px;background:#dedede;"></div><div class="c rh" style="left:0px;top:259.5px;width:20px;height:13px;line-height:12px;color:#222;">238</div><div class="a" style="left:0px;top:272px;width:20px;height:1px;background:#dedede;"></div><div class="c rh" style="left:0px;top:272.5px;width:20px;height:13px;line-height:12px;color:#222;">239</div><div class="a" style="left:0px;top:285px;width:20px;height:1px;background:#dedede;"></div><div class="c rh" style="left:0px;top:285.5px;width:20px;height:13px;line-height:12px;color:#222;">240</div><div class="a" style="left:0px;top:298px;width:20px;height:1px;background:#dedede;"></div><div class="c rh" style="left:0px;top:298.5px;width:20px;height:13px;line-height:12px;color:#222;">241</div><div class="a" style="left:0px;top:311px;width:20px;height:1px;background:#dedede;"></div><div class="c rh" style="left:0px;top:311.5px;width:20px;height:13px;line-height:12px;color:#222;">242</div><div class="a" style="left:0px;top:324px;width:20px;height:1px;background:#dedede;"></div><div class="c rh" style="left:0px;top:324.5px;width:20px;height:13px;line-height:12px;color:#222;">243</div><div class="a" style="left:0px;top:337px;width:20px;height:1px;background:#dedede;"></div><div class="c rh" style="left:0px;top:337.5px;width:20px;height:13px;line-height:12px;color:#222;">244</div><div class="a" style="left:0px;top:350px;width:20px;height:1px;background:#dedede;"></div><div class="c rh" style="left:0px;top:350.5px;width:20px;height:13px;line-height:12px;color:#222;">245</div><div class="a" style="left:0px;top:363px;width:20px;height:1px;background:#dedede;"></div><div class="c rh" style="left:0px;top:363.5px;width:20px;height:13px;line-height:12px;color:#222;">246</div><div class="a" style="left:0px;top:376px;width:20px;height:1px;background:#dedede;"></div><div class="c rh" style="left:0px;top:376.5px;width:20px;height:13px;line-height:12px;color:#222;">247</div><div class="a" style="left:0px;top:389px;width:20px;height:1px;background:#dedede;"></div><div class="c rh" style="left:0px;top:389.5px;width:20px;height:13px;line-height:12px;color:#222;">248</div><div class="a" style="left:0px;top:402px;width:20px;height:1px;background:#dedede;"></div><div class="c rh" style="left:0px;top:402.5px;width:20px;height:13px;line-height:12px;color:#222;">249</div><div class="a" style="left:0px;top:415px;width:20px;height:1px;background:#dedede;"></div><div class="c rh" style="left:0px;top:415.5px;width:20px;height:13px;line-height:12px;color:#222;">250</div><div class="a" style="left:0px;top:428px;width:20px;height:1px;background:#dedede;"></div><div class="c rh" style="left:0px;top:428.5px;width:20px;height:13px;line-height:12px;color:#222;">251</div><div class="a" style="left:0px;top:441px;width:20px;height:1px;background:#dedede;"></div><div class="c rh" style="left:0px;top:441.5px;width:20px;height:13px;line-height:12px;color:#222;">252</div><div class="a" style="left:0px;top:454px;width:20px;height:1px;background:#dedede;"></div><div class="c rh" style="left:0px;top:454.5px;width:20px;height:13px;line-height:12px;color:#222;">253</div><div class="a" style="left:0px;top:467px;width:20px;height:1px;background:#dedede;"></div><div class="c rh" style="left:0px;top:467.5px;width:20px;height:13px;line-height:12px;color:#222;">254</div><div class="a" style="left:0px;top:480px;width:20px;height:1px;background:#dedede;"></div><div class="c rh" style="left:0px;top:480.5px;width:20px;height:13px;line-height:12px;color:#222;">255</div><div class="a" style="left:0px;top:493px;width:20px;height:1px;background:#dedede;"></div><div class="c rh" style="left:0px;top:493.5px;width:20px;height:13px;line-height:12px;color:#222;">256</div><div class="a" style="left:0px;top:506px;width:20px;height:1px;background:#dedede;"></div><div class="c rh" style="left:0px;top:506.5px;width:20px;height:13px;line-height:12px;color:#222;">257</div><div class="a" style="left:0px;top:519px;width:20px;height:1px;background:#dedede;"></div><div class="c rh" style="left:0px;top:519.5px;width:20px;height:13px;line-height:12px;color:#222;">258</div><div class="a" style="left:0px;top:532px;width:20px;height:1px;background:#dedede;"></div><div class="c rh" style="left:0px;top:532.5px;width:20px;height:13px;line-height:12px;color:#222;">259</div><div class="a" style="left:0px;top:545px;width:20px;height:1px;background:#dedede;"></div><div class="c rh" style="left:0px;top:545.5px;width:20px;height:13px;line-height:12px;color:#222;">260</div><div class="a" style="left:0px;top:558px;width:20px;height:1px;background:#dedede;"></div><div class="c rh" style="left:0px;top:558.5px;width:20px;height:13px;line-height:12px;color:#222;">261</div><div class="a" style="left:0px;top:571px;width:20px;height:1px;background:#dedede;"></div><div class="a" style="left:0px;top:0px;width:1440px;height:19px;background:linear-gradient(#f9f9f9,#f2f2f2);border-top:1px solid #c9c9c9;border-bottom:1px solid #cfcfcf"></div><div class="a" style="left:20px;top:1px;width:58px;height:18px;background:#e4e4e4;border-bottom:2px solid #1e7145"></div><div class="c u ch" style="left:20px;top:2px;width:58px;height:16px;line-height:17px;color:#1e7145;">A</div><div class="a" style="left:78px;top:3px;width:1px;height:15px;background:#dedede;"></div><div class="c u ch" style="left:78px;top:2px;width:34px;height:16px;line-height:17px;">B</div><div class="a" style="left:112px;top:3px;width:1px;height:15px;background:#dedede;"></div><div class="c u ch" style="left:112px;top:2px;width:43px;height:16px;line-height:17px;">C</div><div class="a" style="left:155px;top:3px;width:1px;height:15px;background:#dedede;"></div><div class="c u ch" style="left:155px;top:2px;width:34px;height:16px;line-height:17px;">D</div><div class="a" style="left:189px;top:3px;width:1px;height:15px;background:#dedede;"></div><div class="c u ch" style="left:189px;top:2px;width:43px;height:16px;line-height:17px;">E</div><div class="a" style="left:232px;top:3px;width:1px;height:15px;background:#dedede;"></div><div class="c u ch" style="left:232px;top:2px;width:54px;height:16px;line-height:17px;">F</div><div class="a" style="left:286px;top:3px;width:1px;height:15px;background:#dedede;"></div><div class="c u ch" style="left:286px;top:2px;width:83px;height:16px;line-height:17px;">G</div><div class="a" style="left:369px;top:3px;width:1px;height:15px;background:#dedede;"></div><div class="c u ch" style="left:369px;top:2px;width:27px;height:16px;line-height:17px;">H</div><div class="a" style="left:396px;top:3px;width:1px;height:15px;background:#dedede;"></div><div class="c u ch" style="left:396px;top:2px;width:60px;height:16px;line-height:17px;">I</div><div class="a" style="left:456px;top:3px;width:1px;height:15px;background:#dedede;"></div><div class="c u ch" style="left:456px;top:2px;width:25px;height:16px;line-height:17px;">J</div><div class="a" style="left:481px;top:3px;width:1px;height:15px;background:#dedede;"></div><div class="c u ch" style="left:481px;top:2px;width:26px;height:16px;line-height:17px;">K</div><div class="a" style="left:507px;top:3px;width:1px;height:15px;background:#dedede;"></div><div class="c u ch" style="left:507px;top:2px;width:26px;height:16px;line-height:17px;">L</div><div class="a" style="left:533px;top:3px;width:1px;height:15px;background:#dedede;"></div><div class="c u ch" style="left:923px;top:2px;width:33px;height:16px;line-height:17px;">W</div><div class="a" style="left:956px;top:3px;width:1px;height:15px;background:#dedede;"></div><div class="c u ch" style="left:956px;top:2px;width:33px;height:16px;line-height:17px;">X</div><div class="a" style="left:989px;top:3px;width:1px;height:15px;background:#dedede;"></div><div class="c u ch" style="left:989px;top:2px;width:33px;height:16px;line-height:17px;">Y</div><div class="a" style="left:1022px;top:3px;width:1px;height:15px;background:#dedede;"></div><div class="c u ch" style="left:1022px;top:2px;width:33px;height:16px;line-height:17px;">Z</div><div class="a" style="left:1055px;top:3px;width:1px;height:15px;background:#dedede;"></div><div class="c u ch" style="left:1055px;top:2px;width:33px;height:16px;line-height:17px;">AA</div><div class="a" style="left:1088px;top:3px;width:1px;height:15px;background:#dedede;"></div><div class="c u ch" style="left:1088px;top:2px;width:33px;height:16px;line-height:17px;">AB</div><div class="a" style="left:1121px;top:3px;width:1px;height:15px;background:#dedede;"></div><div class="c u ch" style="left:1121px;top:2px;width:33px;height:16px;line-height:17px;">AC</div><div class="a" style="left:1154px;top:3px;width:1px;height:15px;background:#dedede;"></div><div class="c u ch" style="left:1154px;top:2px;width:33px;height:16px;line-height:17px;">AD</div><div class="a" style="left:1187px;top:3px;width:1px;height:15px;background:#dedede;"></div><div class="c u ch" style="left:1187px;top:2px;width:33px;height:16px;line-height:17px;">AE</div><div class="a" style="left:1220px;top:3px;width:1px;height:15px;background:#dedede;"></div><div class="c u ch" style="left:1220px;top:2px;width:33px;height:16px;line-height:17px;">AF</div><div class="a" style="left:1253px;top:3px;width:1px;height:15px;background:#dedede;"></div><div class="c u ch" style="left:1253px;top:2px;width:34px;height:16px;line-height:17px;">AJ</div><div class="a" style="left:1287px;top:3px;width:1px;height:15px;background:#dedede;"></div><div class="c u ch" style="left:1287px;top:2px;width:28px;height:16px;line-height:17px;">AK</div><div class="a" style="left:1315px;top:3px;width:1px;height:15px;background:#dedede;"></div><div class="c u ch" style="left:1315px;top:2px;width:28px;height:16px;line-height:17px;">AL</div><div class="a" style="left:1343px;top:3px;width:1px;height:15px;background:#dedede;"></div><div class="c u ch" style="left:1343px;top:2px;width:52px;height:16px;line-height:17px;">AM</div><div class="a" style="left:1395px;top:3px;width:1px;height:15px;background:#dedede;"></div><div class="c u ch" style="left:1395px;top:2px;width:26px;height:16px;line-height:17px;">AN</div><div class="a" style="left:1421px;top:3px;width:1px;height:15px;background:#dedede;"></div><div class="c u l ch" style="left:1429.5px;top:2px;width:30.5px;height:16px;line-height:17px;">AO</div><div class="a" style="left:20px;top:3px;width:1px;height:15px;background:#dedede;"></div><div class="a" style="left:1251.5px;top:1px;width:3px;height:18px;background:#1e7145;"></div><svg class="a" style="left:4px;top:5px" width="14" height="12" viewBox="0 0 14 12"><path fill="#dcdcdc" d="M13 0v11h-13z"/></svg></div>
<div id="stabs"><div class="abs" style="left:60px;top:2px;width:1px;height:19px;background:#c8c8c8"></div><div class="abs" style="left:143px;top:2px;width:1px;height:19px;background:#c8c8c8"></div><div class="abs" style="left:222px;top:2px;width:1px;height:19px;background:#c8c8c8"></div><div class="abs" style="left:315px;top:2px;width:1px;height:19px;background:#c8c8c8"></div><div class="abs" style="left:408px;top:2px;width:1px;height:19px;background:#c8c8c8"></div><div class="abs" style="left:487px;top:2px;width:1px;height:19px;background:#c8c8c8"></div><div class="abs" style="left:738px;top:2px;width:1px;height:19px;background:#c8c8c8"></div><div class="abs" style="left:899px;top:2px;width:1px;height:19px;background:#c8c8c8"></div><div class="abs" style="left:1044px;top:2px;width:1px;height:19px;background:#c8c8c8"></div><div class="abs" style="left:1123px;top:2px;width:1px;height:19px;background:#c8c8c8"></div><div class="abs" style="left:1232px;top:2px;width:1px;height:19px;background:#c8c8c8"></div><div class="abs" style="left:1312px;top:2px;width:1px;height:19px;background:#c8c8c8"></div><div class="abs" style="left:1369px;top:2px;width:1px;height:19px;background:#c8c8c8"></div><div class="abs" style="left:1407px;top:2px;width:1px;height:19px;background:#c8c8c8"></div><svg class="abs" style="left:13px;top:8px" width="8" height="11" viewBox="0 0 8 11"><path fill="#b9b9b9" d="M7.500 0v11l-7.500-5.500z"/></svg><svg class="abs" style="left:37px;top:8px" width="8" height="11" viewBox="0 0 8 11"><path fill="#5a5a5a" d="M0.500 0v11l7.500-5.500z"/></svg><div class="st" style="left:60px;width:83px">Logbook</div><div class="st" style="left:143px;width:79px">2012 B</div><svg class="abs" style="left:247px;top:7px" width="9" height="11" viewBox="0 0 9 11"><rect x="0" y="4.500" width="9" height="6.500" rx="1" fill="#6b6b6b"/><path fill="none" stroke="#6b6b6b" stroke-width="1.400" d="M2 5v-1.800a2.500 2.500 0 0 1 5 0v1.800"/></svg><div class="st" style="left:222px;width:93px;padding-left:12px">2013</div><svg class="abs" style="left:340px;top:7px" width="9" height="11" viewBox="0 0 9 11"><rect x="0" y="4.500" width="9" height="6.500" rx="1" fill="#6b6b6b"/><path fill="none" stroke="#6b6b6b" stroke-width="1.400" d="M2 5v-1.800a2.500 2.500 0 0 1 5 0v1.800"/></svg><div class="st" style="left:315px;width:93px;padding-left:12px">2014</div><div class="st" style="left:408px;width:79px">2015</div><svg class="abs" style="left:512px;top:7px" width="9" height="11" viewBox="0 0 9 11"><rect x="0" y="4.500" width="9" height="6.500" rx="1" fill="#6b6b6b"/><path fill="none" stroke="#6b6b6b" stroke-width="1.400" d="M2 5v-1.800a2.500 2.500 0 0 1 5 0v1.800"/></svg><div class="st" style="left:487px;width:93px;padding-left:12px">2018</div><div class="st" style="left:659px;width:79px">2020</div><div class="st" style="left:738px;width:161px;letter-spacing:0">Total heure par Année</div><div class="st" style="left:899px;width:145px;letter-spacing:-0.450px">LISTE DES AVIONS</div><div class="st" style="left:1044px;width:79px">Totaux</div><div class="st" style="left:1123px;width:109px">Journée aéro</div><div class="st" style="left:1232px;width:80px">Liste AD</div><div class="abs" style="left:580px;top:-1px;width:79px;height:23px;background:#fff;border:1px solid #c4c4c4;border-top:none;border-radius:0 0 4px 4px;box-shadow:0 1px 1px rgba(0,0,0,0.150)"></div><div class="st" style="left:580px;width:79px;color:#1e7145;font-weight:bold">2019</div><div class="st" style="left:1312px;width:57px;text-align:left;padding-left:25px;overflow:hidden;color:#9a9a9a">Carte</div><div class="abs" style="left:1350px;top:2px;width:19px;height:20px;background:linear-gradient(90deg,rgba(240,240,240,0),#f0f0f0)"></div><svg class="abs" style="left:1382px;top:7px" width="12" height="12" viewBox="0 0 12 12"><path stroke="#444" stroke-width="1.600" d="M6 0.500v11M0.500 6h11"/></svg></div><div id="status"><div class="abs" style="left:0;top:1px"><div class="abs" style="left:975px;top:4px;font-size:12px;line-height:15px;color:#555;white-space:nowrap;letter-spacing:0.350px">Calcul (4 threads) : 0%</div><svg class="abs" style="left:1128px;top:5px" width="13" height="12" viewBox="0 0 13 12"><path fill="none" stroke="#666" stroke-width="1" d="M0.500 0.500h12v11h-12zM0.500 4.500h12M0.500 8h12M4.500 0.500v11M8.500 0.500v11"/></svg><svg class="abs" style="left:1164px;top:5px" width="13" height="12" viewBox="0 0 13 12"><path fill="none" stroke="#666" stroke-width="1" d="M0.500 0.500h12v11h-12zM3.500 3.500h6v5h-6zM4.500 5.500h4M4.500 7h4"/></svg><svg class="abs" style="left:1200px;top:5px" width="13" height="12" viewBox="0 0 13 12"><path fill="none" stroke="#666" stroke-width="1" d="M0.500 0.500h12v11h-12zM3.500 0.500v6h6v-6"/></svg><div class="abs" style="left:1232px;top:10px;width:8px;height:2px;background:#555"></div><div class="abs" style="left:1248px;top:9px;width:98px;height:4px;border-radius:2px;background:#b5b5b5"></div><div class="abs" style="left:1284px;top:5px;width:12px;height:12px;border-radius:6px;background:#fff;border:1px solid #b9b9b9;box-shadow:0 0.500px 1px rgba(0,0,0,0.300)"></div><svg class="abs" style="left:1353px;top:6px" width="10" height="10" viewBox="0 0 10 10"><path stroke="#555" stroke-width="1.800" d="M5 0.500v9M0.500 5h9"/></svg><div class="abs" style="left:1382px;top:4px;font-size:12px;line-height:15px;color:#555;white-space:nowrap">85 %</div></div></div>
</div>
<div id="dock"><div class="abs" style="left:0;top:-2px"><svg class="abs" style="left:7px;top:7px" width="36" height="34" viewBox="0 0 36 34"><rect width="36" height="34" rx="3" fill="#2e8ff0"/><path fill="#e8f1fb" d="M19 0h14a3 3 0 0 1 3 3v28a3 3 0 0 1-3 3h-11c-2-6-2.500-9-2.500-14h-4c0-8 1.500-14 3.500-20z"/><path fill="none" stroke="#1b2a3a" stroke-width="1.500" d="M7 23c6 5 16 5 22 0M10 9v4M26 9v4"/></svg><svg class="abs" style="left:50px;top:6px" width="38" height="38" viewBox="0 0 38 38"><circle cx="19" cy="19" r="18.500" fill="#e9e9e9"/><circle cx="19" cy="19" r="16.500" fill="#2a8fee"/><path fill="#f04437" d="M30 8l-8.500 13.500-5-5z"/><path fill="#fff" d="M8 30l8.500-13.500 5 5z"/></svg><svg class="abs" style="left:95px;top:5px" width="36" height="40" viewBox="0 0 36 40"><g transform="rotate(-8 18 20)"><rect x="3" y="3" width="29" height="34" fill="#f4f4f4"/><rect x="6" y="6" width="23" height="28" fill="#3b8be0"/><path fill="#8a6a4a" d="M10 14c4-1 6 2 8 5 3 0 6 2 8 6-3-1-5-1-7 0-1 2-3 3-5 2 1-2 1-3 0-5-2-2-3-5-4-8z"/><path fill="#f4f4f4" d="M10 10h5v2h-5zM20 27h6v4h-6z" opacity="0.600"/></g></svg><svg class="abs" style="left:137px;top:6px" width="38" height="38" viewBox="0 0 38 38"><g transform="rotate(-4 19 19)"><rect x="3" y="3" width="32" height="32" rx="3" fill="#fafafa"/><path fill="#e0453a" d="M3 6a3 3 0 0 1 3-3h26a3 3 0 0 1 3 3v7h-32z"/><text x="19" y="11.500" font-size="8" fill="#fff" text-anchor="middle" font-family="Liberation Sans, sans-serif" font-weight="bold">AOÛT</text><text x="19" y="31" font-size="19" fill="#333" text-anchor="middle" font-family="Liberation Sans, sans-serif">14</text></g></svg><svg class="abs" style="left:182px;top:6px" width="40" height="38" viewBox="0 0 40 38"><rect x="1" y="3" width="34" height="34" rx="3" fill="#8e8e8e"/><circle cx="18" cy="20" r="13" fill="#5a5a5a" stroke="#444" stroke-width="3" stroke-dasharray="3 2"/><circle cx="18" cy="20" r="9.500" fill="#9a9a9a"/><path stroke="#3d3d3d" stroke-width="2.500" d="M18 20v-9M18 20l8 4.500M18 20l-8 4.500"/><circle cx="18" cy="20" r="2.500" fill="#3d3d3d"/><circle cx="32" cy="7" r="7" fill="#e8383d"/><text x="32" y="10.500" font-size="10" fill="#fff" text-anchor="middle" font-family="Liberation Sans, sans-serif">1</text></svg><svg class="abs" style="left:224px;top:3px" width="42" height="42" viewBox="0 0 42 42"><circle cx="20" cy="23" r="18" fill="#e8433a"/><path fill="#f7b733" d="M24 1c6 4 8 9 6 13 5 2 9 8 8 14-1 6-5 10-9 12 4-5 4-11 0-15-3-3-5-8-5-24z"/><circle cx="20" cy="21" r="9" fill="#2b6fe0"/><path fill="#f58a2a" d="M9 17c4-3 7-1 9 2 3 1 4 3 3 5-3-1-5 0-6 3 4 3 9 2 12-1-1 7-7 11-13 10-6-1-10-7-9-13 0-2 2-5 4-6z"/></svg><svg class="abs" style="left:268px;top:5px" width="40" height="40" viewBox="0 0 40 40"><defs><linearGradient id="gg" x1="0" y1="0" x2="0" y2="1"><stop offset="0" stop-color="#d94ab8"/><stop offset="0.350" stop-color="#ee4c4c"/><stop offset="0.700" stop-color="#f58a2a"/><stop offset="1" stop-color="#f7b733"/></linearGradient></defs><circle cx="20" cy="20" r="19.500" fill="#f2f2f2"/><circle cx="20" cy="20" r="17.500" fill="url(#gg)"/><path fill="none" stroke="#fff" stroke-width="4" d="M28.500 13a11 11 0 1 0 2.500 8h-10"/></svg><svg class="abs" style="left:313px;top:5px" width="40" height="40" viewBox="0 0 40 40"><rect x="18" y="5" width="20" height="29" rx="1" fill="#fff"/><rect x="23" y="8" width="6" height="3" fill="#2e8b57"/><rect x="31" y="8" width="6" height="3" fill="#2e8b57"/><rect x="23" y="12.5" width="6" height="3" fill="#2e8b57"/><rect x="31" y="12.5" width="6" height="3" fill="#2e8b57"/><rect x="23" y="17" width="6" height="3" fill="#2e8b57"/><rect x="31" y="17" width="6" height="3" fill="#2e8b57"/><rect x="23" y="21.5" width="6" height="3" fill="#2e8b57"/><rect x="31" y="21.5" width="6" height="3" fill="#2e8b57"/><rect x="23" y="26" width="6" height="3" fill="#2e8b57"/><rect x="31" y="26" width="6" height="3" fill="#2e8b57"/><rect x="23" y="30.5" width="6" height="3" fill="#2e8b57"/><rect x="31" y="30.5" width="6" height="3" fill="#2e8b57"/><path fill="#1f7246" d="M1 5l22-4v38l-22-5z"/><text x="6.500" y="26" font-size="15" font-weight="bold" fill="#fff" font-family="Liberation Sans, sans-serif">X</text></svg><svg class="abs" style="left:357px;top:5px" width="38" height="40" viewBox="0 0 38 40"><path fill="#f08a24" d="M19 1c1.500 0 2.500 1 3 2.500l9 24 4 9c1 2 0 3-2 3h-28c-2 0-3-1-2-3l4-9 9-24c0.500-1.500 1.500-2.500 3-2.500z"/><path fill="#f4f4f4" d="M14.300 11h9.400l2.200 6h-13.800zM9.500 23h19l2 5.500h-23z"/></svg><svg class="abs" style="left:402px;top:6px" width="36" height="38" viewBox="0 0 36 38"><g transform="rotate(-5 18 19)"><rect x="3" y="2" width="30" height="34" rx="2" fill="#b5b5b5"/><rect x="3" y="2" width="30" height="8" rx="2" fill="#4a4a4a"/><rect x="25" y="10" width="8" height="26" fill="#f08a35"/><path stroke="#9a9a9a" d="M3 17h22M3 23h22M3 29h22M10 10v26M17.500 10v26"/></g></svg><div class="abs" style="left:453px;top:8px;width:1px;height:38px;background:#5a5a5a"></div><svg class="abs" style="left:464px;top:9px" width="40" height="32" viewBox="0 0 40 32"><path fill="#3f8fd8" d="M1 4a2 2 0 0 1 2-2h10l3 3h21a2 2 0 0 1 2 2v22a2 2 0 0 1-2 2h-34a2 2 0 0 1-2-2z"/><path fill="#5aa7ea" d="M1 8h38v21a2 2 0 0 1-2 2h-34a2 2 0 0 1-2-2z"/><path fill="none" stroke="#3f8fd8" stroke-width="1.300" d="M14 12h8l4 4v11h-12z"/></svg><svg class="abs" style="left:508px;top:4px" width="40" height="42" viewBox="0 0 40 42"><rect x="6" y="2" width="30" height="12" fill="#222" stroke="#e8e8e8" stroke-width="1.200"/><circle cx="20" cy="23" r="18" fill="#4a9ae8"/><path fill="#fff" d="M11 29a5 5 0 0 1-0.500-10a7 7 0 0 1 13.500-1.500a6 6 0 0 1 5 11.500z"/><path fill="#4a9ae8" d="M17.500 19l6-1.500v7a1.800 1.800 0 1 1-1.200-1.700v-3.500l-3.600 0.900v5a1.800 1.800 0 1 1-1.200-1.700z"/></svg><svg class="abs" style="left:557px;top:6px" width="30" height="38" viewBox="0 0 30 38"><path fill="#f4f4f4" d="M1 1h18l10 10v26h-28z"/><path fill="#222" d="M19 1h10v10c-2-6-4-8-10-10z"/><path stroke="#d8d8d8" d="M4 8h12M4 12h14M4 16h20M4 20h20M4 24h20M4 28h20M4 32h20"/></svg><svg class="abs" style="left:600px;top:3px" width="32" height="43" viewBox="0 0 32 40" preserveAspectRatio="none"><path fill="#4d4d4d" d="M2 8h28l-3 29a3 3 0 0 1-3 2.500h-16a3 3 0 0 1-3-2.500z"/><ellipse cx="16" cy="8" rx="14.500" ry="4.500" fill="#6e6e6e"/><ellipse cx="16" cy="7.500" rx="11" ry="3" fill="#cfcfcf"/><path stroke="#3a3a3a" d="M9 13l2 25M16 13v26M23 13l-2 25"/></svg></div><div class="abs" style="left:24px;top:46px;width:3px;height:3px;border-radius:2px;background:#9a9a9a"></div><div class="abs" style="left:68px;top:46px;width:3px;height:3px;border-radius:2px;background:#9a9a9a"></div><div class="abs" style="left:112px;top:46px;width:3px;height:3px;border-radius:2px;background:#9a9a9a"></div><div class="abs" style="left:243px;top:46px;width:3px;height:3px;border-radius:2px;background:#9a9a9a"></div><div class="abs" style="left:331px;top:46px;width:3px;height:3px;border-radius:2px;background:#9a9a9a"></div><div class="abs" style="left:375px;top:46px;width:3px;height:3px;border-radius:2px;background:#9a9a9a"></div><div class="abs" style="left:419px;top:46px;width:3px;height:3px;border-radius:2px;background:#9a9a9a"></div></div>
<div id="dlg"><div id="dlgt"></div><svg class="abs" style="left:27px;top:41px" width="60" height="60" viewBox="0 0 60 60"><path fill="#000" opacity="0.120" d="M6 52l28 6.500 4-1-4-4z"/><rect x="30" y="6" width="27.200" height="45.400" rx="1" fill="#fff" stroke="#c9c9c9" stroke-width="0.700"/><rect x="34" y="13" width="7" height="5" fill="#3a3a3a"/><rect x="43" y="13" width="9" height="5" fill="#3a3a3a"/><rect x="34" y="20" width="7" height="5" fill="#3e9467"/><rect x="43" y="20" width="9" height="5" fill="#3e9467"/><rect x="34" y="27" width="7" height="5" fill="#3e9467"/><rect x="43" y="27" width="9" height="5" fill="#3e9467"/><rect x="34" y="34" width="7" height="5" fill="#3e9467"/><rect x="43" y="34" width="9" height="5" fill="#3e9467"/><rect x="34" y="41" width="7" height="5" fill="#3e9467"/><rect x="43" y="41" width="9" height="5" fill="#3e9467"/><path fill="#2e7d50" d="M0.800 6l33.200-5.200v56l-33.200-5.800z"/><path fill="#4a9a6c" opacity="0.450" d="M34 0.800v56l-8-1.400c3-8 5-20-2-30c-3-6-4-14-2-22.800z"/><text x="0" y="39.400" font-size="28.500" font-weight="bold" fill="#f4f4f4" font-family="Liberation Sans, sans-serif" transform="translate(8.600 0) scale(0.760 1)">X</text></svg><div class="abs" style="left:106px;top:40px;font-size:13.400px;line-height:16px;font-weight:bold;color:#262626;white-space:nowrap">Microsoft Excel</div><div class="abs" style="left:106px;top:64px;font-size:11px;line-height:14px;color:#262626;white-space:nowrap;letter-spacing:0.400px">&gt;&lt; n'est pas une latitude valide</div><div class="abs" style="left:321px;top:112px;width:79px;height:21px;border-radius:4px;background:linear-gradient(#55a7fa,#2b84f6 50%,#1a6ff2);box-shadow:0 0.500px 1px rgba(0,0,0,0.350);color:#fff;font-size:13px;line-height:21px;text-align:center;text-shadow:0 0 0.500px #fff">OK</div></div>
</body></html>
